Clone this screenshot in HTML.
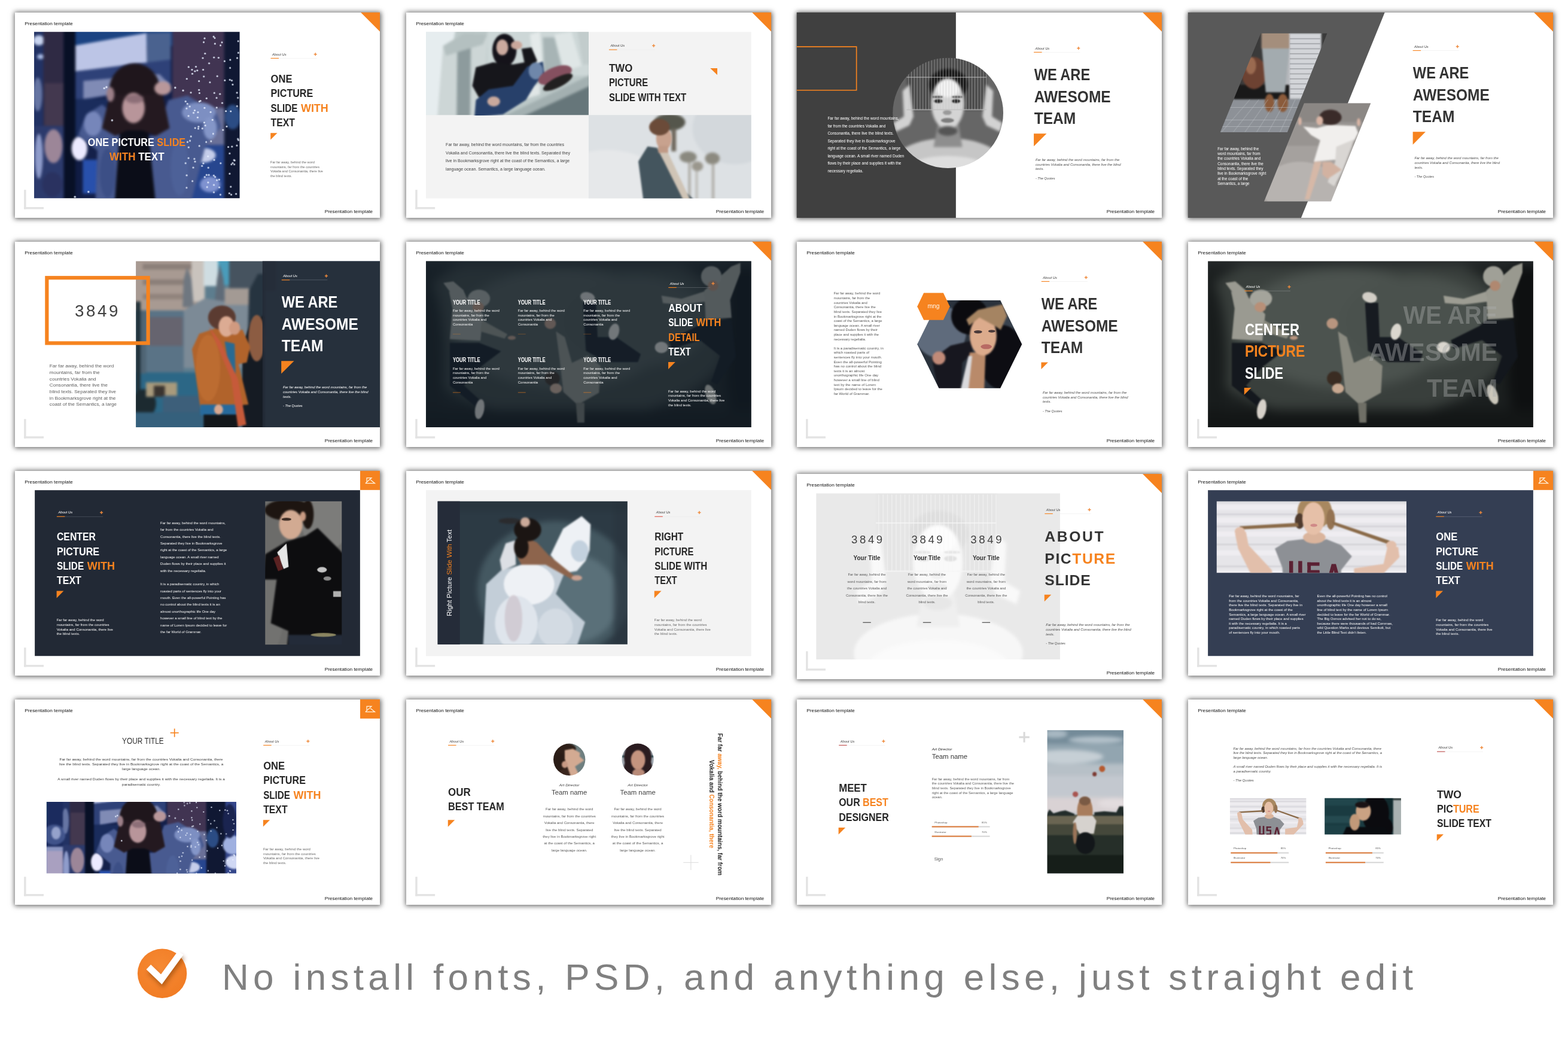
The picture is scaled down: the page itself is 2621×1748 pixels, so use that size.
<!DOCTYPE html>
<html lang="en"><head><meta charset="utf-8"><title>Presentation template</title>
<style>
html,body{margin:0;padding:0;background:#fff}
body{width:2621px;height:1748px;position:relative;overflow:hidden;font-family:"Liberation Sans",sans-serif}
.f{position:absolute;width:610.3px;height:343.3px;background:#fff;box-shadow:0 0 8px 1.5px rgba(0,0,0,.6)}
svg{position:absolute;overflow:visible;opacity:.999}
svg text{font-family:"Liberation Sans",sans-serif;white-space:pre}
</style></head><body>
<div class="f" style="left:24.8px;top:20.80px"></div>
<div class="f" style="left:678.8px;top:20.80px"></div>
<div class="f" style="left:1331.7px;top:20.80px"></div>
<div class="f" style="left:1985.7px;top:20.80px"></div>
<div class="f" style="left:24.8px;top:403.70px"></div>
<div class="f" style="left:678.8px;top:403.70px"></div>
<div class="f" style="left:1331.7px;top:403.70px"></div>
<div class="f" style="left:1985.7px;top:403.70px"></div>
<div class="f" style="left:24.8px;top:786.85px;height:342.3px"></div>
<div class="f" style="left:678.8px;top:786.85px;height:342.3px"></div>
<div class="f" style="left:1331.7px;top:792.00px"></div>
<div class="f" style="left:1985.7px;top:786.85px;height:342.3px"></div>
<div class="f" style="left:24.8px;top:1168.80px"></div>
<div class="f" style="left:678.8px;top:1168.80px"></div>
<div class="f" style="left:1331.7px;top:1168.80px"></div>
<div class="f" style="left:1985.7px;top:1168.80px"></div>
<svg width="0" height="0" style="left:0;top:0"><defs><filter id="b12" x="-20%" y="-20%" width="140%" height="140%" color-interpolation-filters="sRGB"><feGaussianBlur stdDeviation="12"/></filter><filter id="b10" x="-20%" y="-20%" width="140%" height="140%" color-interpolation-filters="sRGB"><feGaussianBlur stdDeviation="10"/></filter><filter id="b3" x="-20%" y="-20%" width="140%" height="140%" color-interpolation-filters="sRGB"><feGaussianBlur stdDeviation="3"/></filter><filter id="b9" x="-20%" y="-20%" width="140%" height="140%" color-interpolation-filters="sRGB"><feGaussianBlur stdDeviation="9"/></filter><filter id="b6" x="-20%" y="-20%" width="140%" height="140%" color-interpolation-filters="sRGB"><feGaussianBlur stdDeviation="6"/></filter><filter id="b14" x="-20%" y="-20%" width="140%" height="140%" color-interpolation-filters="sRGB"><feGaussianBlur stdDeviation="14"/></filter><filter id="b2" x="-20%" y="-20%" width="140%" height="140%" color-interpolation-filters="sRGB"><feGaussianBlur stdDeviation="2"/></filter><filter id="b8" x="-20%" y="-20%" width="140%" height="140%" color-interpolation-filters="sRGB"><feGaussianBlur stdDeviation="8"/></filter><filter id="b40" x="-20%" y="-20%" width="140%" height="140%" color-interpolation-filters="sRGB"><feGaussianBlur stdDeviation="40"/></filter><filter id="b5" x="-20%" y="-20%" width="140%" height="140%" color-interpolation-filters="sRGB"><feGaussianBlur stdDeviation="5"/></filter><filter id="b4" x="-20%" y="-20%" width="140%" height="140%" color-interpolation-filters="sRGB"><feGaussianBlur stdDeviation="4"/></filter><filter id="b30" x="-20%" y="-20%" width="140%" height="140%" color-interpolation-filters="sRGB"><feGaussianBlur stdDeviation="30"/></filter><filter id="b20" x="-20%" y="-20%" width="140%" height="140%" color-interpolation-filters="sRGB"><feGaussianBlur stdDeviation="20"/></filter></defs></svg>
<svg style="left:0px;top:0px" width="660" height="400" viewBox="0 0 2351 1425">
<text x="147.0" y="148.0" font-size="27.0" fill="#0d0d0d" textLength="287.0" lengthAdjust="spacingAndGlyphs">Presentation template</text>
<polygon points="2148.0,74.0 2262.0,74.0 2262.0,188.0" fill="#f6831f" />
<rect x="143.0" y="1130.0" width="12.0" height="115.0" fill="#e3e3e3" />
<rect x="143.0" y="1233.0" width="117.0" height="12.0" fill="#e3e3e3" />
<text x="2220.0" y="1268.5" font-size="27.0" fill="#0d0d0d" text-anchor="end" textLength="287.0" lengthAdjust="spacingAndGlyphs">Presentation template</text>
<clipPath id="c1"><rect x="203.0" y="190.0" width="1224.0" height="990.0"/></clipPath>
<g clip-path="url(#c1)"><g transform="translate(177.50,159.84) scale(0.67105,0.67028)"><g filter="url(#b12)"><rect x="-200" y="-200" width="2300" height="2000" fill="#14204a"/><rect x="-100" y="-100" width="225" height="1800" fill="#223264"/><ellipse cx="80" cy="120" rx="50" ry="45" fill="#c8d4f0"/><ellipse cx="95" cy="265" rx="30" ry="22" fill="#a9bbe6"/><ellipse cx="70" cy="600" rx="40" ry="150" fill="#6675a3"/><rect x="120" y="-100" width="180" height="980" fill="#2f2a44"/><rect x="130" y="500" width="170" height="380" fill="#43384f"/><rect x="300" y="-100" width="105" height="1800" fill="#081026"/><rect x="405" y="-100" width="65" height="1800" fill="#101c44"/><rect x="405" y="-100" width="860" height="270" fill="#1b4382"/><polygon points="405,165 1035,55 1040,330 405,395" fill="#bcc5e6"/><polygon points="1040,55 1250,50 1250,300 1040,330" fill="#4a628f"/><polygon points="405,395 1250,290 1250,520 470,650 405,650" fill="#2e4178"/><polygon points="475,480 1150,420 1250,520 475,640" fill="#808bb5"/><rect x="405" y="640" width="295" height="360" fill="#1a2c5c"/><rect x="1265" y="-100" width="460" height="820" fill="#413452"/><rect x="1725" y="-100" width="375" height="1800" fill="#101833"/><ellipse cx="1800" cy="800" rx="70" ry="110" fill="#2b4c84"/><rect x="1265" y="720" width="460" height="330" fill="#6a7098"/><rect x="-100" y="880" width="400" height="820" fill="#2c3a6c"/><ellipse cx="210" cy="1060" rx="80" ry="150" fill="#9c8698"/><ellipse cx="80" cy="1150" rx="35" ry="200" fill="#8f9ccb"/><ellipse cx="200" cy="1400" rx="90" ry="110" fill="#2a3260"/><ellipse cx="440" cy="1080" rx="70" ry="105" fill="#eceaff"/><rect x="470" y="1180" width="140" height="300" fill="#2850ac"/><rect x="1420" y="1050" width="305" height="650" fill="#27468f"/><ellipse cx="1540" cy="1140" rx="110" ry="65" fill="#c5cdea"/><ellipse cx="1600" cy="1400" rx="90" ry="70" fill="#7f92d0"/></g><g filter="url(#b10)"><polygon points="430,960 500,780 640,690 730,760 770,900 900,970 1110,970 1230,650 1400,610 1660,770 1700,890 1560,1050 1420,1600 580,1600 600,1100" fill="#485a90"/><ellipse cx="560" cy="860" rx="80" ry="110" fill="#7686ba"/><ellipse cx="1500" cy="760" rx="150" ry="90" fill="#7d8fc2"/><ellipse cx="1330" cy="1250" rx="80" ry="250" fill="#4d6198"/><ellipse cx="690" cy="1300" rx="70" ry="220" fill="#3c4f86"/><ellipse cx="1600" cy="900" rx="60" ry="100" fill="#8496c8"/><polygon points="800,900 1050,900 1120,1600 750,1600" fill="#0b0d18"/><ellipse cx="930" cy="560" rx="225" ry="235" fill="#1f161c"/><polygon points="710,600 640,900 760,970 860,920 1000,920 1120,970 1240,900 1180,600" fill="#241920"/><ellipse cx="920" cy="720" rx="100" ry="135" fill="#b8959a"/><ellipse cx="930" cy="640" rx="80" ry="40" fill="#8d6f78"/><ellipse cx="1180" cy="545" rx="75" ry="60" fill="#b9979a"/><ellipse cx="715" cy="600" rx="35" ry="65" fill="#9c7f88"/></g><g filter="url(#b3)"><ellipse cx="1535" cy="277" rx="8" ry="8" fill="#e8f0ff" opacity="0.9"/><ellipse cx="1692" cy="164" rx="8" ry="8" fill="#e8f0ff" opacity="0.9"/><ellipse cx="1637" cy="587" rx="8" ry="8" fill="#e8f0ff" opacity="0.9"/><ellipse cx="1408" cy="791" rx="8" ry="8" fill="#e8f0ff" opacity="0.9"/><ellipse cx="1398" cy="684" rx="8" ry="8" fill="#e8f0ff" opacity="0.9"/><ellipse cx="1584" cy="1251" rx="8" ry="8" fill="#e8f0ff" opacity="0.9"/><ellipse cx="1439" cy="381" rx="8" ry="8" fill="#e8f0ff" opacity="0.9"/><ellipse cx="1681" cy="1425" rx="8" ry="8" fill="#e8f0ff" opacity="0.9"/><ellipse cx="1657" cy="631" rx="8" ry="8" fill="#e8f0ff" opacity="0.9"/><ellipse cx="1849" cy="127" rx="8" ry="8" fill="#e8f0ff" opacity="0.9"/><ellipse cx="1792" cy="477" rx="8" ry="8" fill="#e8f0ff" opacity="0.9"/><ellipse cx="1528" cy="1235" rx="8" ry="8" fill="#e8f0ff" opacity="0.9"/><ellipse cx="1467" cy="898" rx="8" ry="8" fill="#e8f0ff" opacity="0.9"/><ellipse cx="1687" cy="596" rx="8" ry="8" fill="#e8f0ff" opacity="0.9"/><ellipse cx="1643" cy="150" rx="8" ry="8" fill="#e8f0ff" opacity="0.9"/><ellipse cx="1409" cy="357" rx="8" ry="8" fill="#e8f0ff" opacity="0.9"/><ellipse cx="1707" cy="676" rx="8" ry="8" fill="#e8f0ff" opacity="0.9"/><ellipse cx="1531" cy="903" rx="8" ry="8" fill="#e8f0ff" opacity="0.9"/><ellipse cx="1598" cy="492" rx="8" ry="8" fill="#e8f0ff" opacity="0.9"/><ellipse cx="1761" cy="1067" rx="8" ry="8" fill="#e8f0ff" opacity="0.9"/><ellipse cx="1497" cy="887" rx="8" ry="8" fill="#e8f0ff" opacity="0.9"/><ellipse cx="1632" cy="1320" rx="8" ry="8" fill="#e8f0ff" opacity="0.9"/><ellipse cx="1730" cy="475" rx="8" ry="8" fill="#e8f0ff" opacity="0.9"/><ellipse cx="1850" cy="230" rx="8" ry="8" fill="#e8f0ff" opacity="0.9"/><ellipse cx="1581" cy="1150" rx="8" ry="8" fill="#e8f0ff" opacity="0.9"/><ellipse cx="1453" cy="764" rx="8" ry="8" fill="#e8f0ff" opacity="0.9"/><ellipse cx="1399" cy="1022" rx="8" ry="8" fill="#e8f0ff" opacity="0.9"/><ellipse cx="1747" cy="885" rx="8" ry="8" fill="#e8f0ff" opacity="0.9"/><ellipse cx="1800" cy="512" rx="8" ry="8" fill="#e8f0ff" opacity="0.9"/><ellipse cx="1714" cy="916" rx="8" ry="8" fill="#e8f0ff" opacity="0.9"/><ellipse cx="1658" cy="717" rx="8" ry="8" fill="#e8f0ff" opacity="0.9"/><ellipse cx="1783" cy="1420" rx="8" ry="8" fill="#e8f0ff" opacity="0.9"/><ellipse cx="1608" cy="1016" rx="8" ry="8" fill="#e8f0ff" opacity="0.9"/><ellipse cx="1409" cy="1070" rx="8" ry="8" fill="#e8f0ff" opacity="0.9"/><ellipse cx="1691" cy="1490" rx="8" ry="8" fill="#e8f0ff" opacity="0.9"/><ellipse cx="1775" cy="470" rx="8" ry="8" fill="#e8f0ff" opacity="0.9"/><ellipse cx="1565" cy="1023" rx="8" ry="8" fill="#e8f0ff" opacity="0.9"/><ellipse cx="1391" cy="725" rx="8" ry="8" fill="#e8f0ff" opacity="0.9"/><ellipse cx="1408" cy="1166" rx="8" ry="8" fill="#e8f0ff" opacity="0.9"/><ellipse cx="1442" cy="417" rx="8" ry="8" fill="#e8f0ff" opacity="0.9"/><ellipse cx="1568" cy="1315" rx="8" ry="8" fill="#e8f0ff" opacity="0.9"/><ellipse cx="1419" cy="707" rx="8" ry="8" fill="#e8f0ff" opacity="0.9"/><ellipse cx="1644" cy="1332" rx="8" ry="8" fill="#e8f0ff" opacity="0.9"/><ellipse cx="1773" cy="1304" rx="8" ry="8" fill="#e8f0ff" opacity="0.9"/><ellipse cx="1514" cy="658" rx="8" ry="8" fill="#e8f0ff" opacity="0.9"/><ellipse cx="1552" cy="1333" rx="8" ry="8" fill="#e8f0ff" opacity="0.9"/><ellipse cx="1840" cy="277" rx="8" ry="8" fill="#e8f0ff" opacity="0.9"/><ellipse cx="1465" cy="394" rx="8" ry="8" fill="#e8f0ff" opacity="0.9"/><ellipse cx="1492" cy="758" rx="8" ry="8" fill="#e8f0ff" opacity="0.9"/><ellipse cx="1663" cy="438" rx="8" ry="8" fill="#e8f0ff" opacity="0.9"/><ellipse cx="1382" cy="663" rx="8" ry="8" fill="#e8f0ff" opacity="0.9"/><ellipse cx="1557" cy="876" rx="8" ry="8" fill="#e8f0ff" opacity="0.9"/><ellipse cx="1837" cy="1054" rx="8" ry="8" fill="#e8f0ff" opacity="0.9"/><ellipse cx="1627" cy="949" rx="8" ry="8" fill="#e8f0ff" opacity="0.9"/><ellipse cx="1705" cy="138" rx="8" ry="8" fill="#e8f0ff" opacity="0.9"/><ellipse cx="1812" cy="1183" rx="8" ry="8" fill="#e8f0ff" opacity="0.9"/><ellipse cx="1800" cy="1209" rx="8" ry="8" fill="#e8f0ff" opacity="0.9"/><ellipse cx="1568" cy="635" rx="8" ry="8" fill="#e8f0ff" opacity="0.9"/><ellipse cx="1430" cy="973" rx="8" ry="8" fill="#e8f0ff" opacity="0.9"/><ellipse cx="1543" cy="136" rx="8" ry="8" fill="#e8f0ff" opacity="0.9"/><ellipse cx="1429" cy="584" rx="8" ry="8" fill="#e8f0ff" opacity="0.9"/><ellipse cx="1392" cy="1319" rx="8" ry="8" fill="#e8f0ff" opacity="0.9"/><ellipse cx="1675" cy="274" rx="8" ry="8" fill="#e8f0ff" opacity="0.9"/><ellipse cx="1501" cy="560" rx="8" ry="8" fill="#e8f0ff" opacity="0.9"/><ellipse cx="1555" cy="237" rx="8" ry="8" fill="#e8f0ff" opacity="0.9"/><ellipse cx="1787" cy="1490" rx="8" ry="8" fill="#e8f0ff" opacity="0.9"/><ellipse cx="1604" cy="757" rx="8" ry="8" fill="#e8f0ff" opacity="0.9"/><ellipse cx="1544" cy="441" rx="8" ry="8" fill="#e8f0ff" opacity="0.9"/><ellipse cx="1778" cy="292" rx="8" ry="8" fill="#e8f0ff" opacity="0.9"/><ellipse cx="1391" cy="1429" rx="8" ry="8" fill="#e8f0ff" opacity="0.9"/><ellipse cx="1634" cy="271" rx="8" ry="8" fill="#e8f0ff" opacity="0.9"/><ellipse cx="1641" cy="99" rx="8" ry="8" fill="#e8f0ff" opacity="0.9"/><ellipse cx="1633" cy="1469" rx="8" ry="8" fill="#e8f0ff" opacity="0.9"/><ellipse cx="1794" cy="1063" rx="8" ry="8" fill="#e8f0ff" opacity="0.9"/><ellipse cx="1505" cy="588" rx="8" ry="8" fill="#e8f0ff" opacity="0.9"/><ellipse cx="1460" cy="1172" rx="8" ry="8" fill="#e8f0ff" opacity="0.9"/><ellipse cx="1636" cy="1182" rx="8" ry="8" fill="#e8f0ff" opacity="0.9"/><ellipse cx="1538" cy="381" rx="8" ry="8" fill="#e8f0ff" opacity="0.9"/><ellipse cx="1770" cy="1478" rx="8" ry="8" fill="#e8f0ff" opacity="0.9"/><ellipse cx="1789" cy="1221" rx="8" ry="8" fill="#e8f0ff" opacity="0.9"/><ellipse cx="1773" cy="1125" rx="8" ry="8" fill="#e8f0ff" opacity="0.9"/><ellipse cx="1489" cy="805" rx="8" ry="8" fill="#e8f0ff" opacity="0.9"/><ellipse cx="1551" cy="102" rx="8" ry="8" fill="#e8f0ff" opacity="0.9"/><ellipse cx="1393" cy="462" rx="8" ry="8" fill="#e8f0ff" opacity="0.9"/><ellipse cx="1504" cy="1057" rx="8" ry="8" fill="#e8f0ff" opacity="0.9"/><ellipse cx="1839" cy="704" rx="8" ry="8" fill="#e8f0ff" opacity="0.9"/><ellipse cx="1830" cy="1483" rx="8" ry="8" fill="#e8f0ff" opacity="0.9"/><ellipse cx="1838" cy="585" rx="8" ry="8" fill="#e8f0ff" opacity="0.9"/><ellipse cx="1486" cy="387" rx="8" ry="8" fill="#e8f0ff" opacity="0.9"/><ellipse cx="1474" cy="354" rx="8" ry="8" fill="#e8f0ff" opacity="0.9"/><ellipse cx="1680" cy="1356" rx="8" ry="8" fill="#e8f0ff" opacity="0.9"/><ellipse cx="1783" cy="750" rx="8" ry="8" fill="#e8f0ff" opacity="0.9"/><ellipse cx="1693" cy="1211" rx="8" ry="8" fill="#e8f0ff" opacity="0.9"/><ellipse cx="1421" cy="1011" rx="8" ry="8" fill="#e8f0ff" opacity="0.9"/><ellipse cx="1817" cy="1187" rx="8" ry="8" fill="#e8f0ff" opacity="0.9"/><ellipse cx="1740" cy="748" rx="8" ry="8" fill="#e8f0ff" opacity="0.9"/><ellipse cx="1466" cy="1196" rx="8" ry="8" fill="#e8f0ff" opacity="0.9"/><ellipse cx="1540" cy="1213" rx="8" ry="8" fill="#e8f0ff" opacity="0.9"/><ellipse cx="1846" cy="630" rx="8" ry="8" fill="#e8f0ff" opacity="0.9"/><ellipse cx="1573" cy="1423" rx="8" ry="8" fill="#e8f0ff" opacity="0.9"/><ellipse cx="1728" cy="305" rx="8" ry="8" fill="#e8f0ff" opacity="0.9"/><ellipse cx="1814" cy="1221" rx="8" ry="8" fill="#e8f0ff" opacity="0.9"/><ellipse cx="1450" cy="1250" rx="8" ry="8" fill="#e8f0ff" opacity="0.9"/><ellipse cx="1851" cy="1006" rx="8" ry="8" fill="#e8f0ff" opacity="0.9"/><ellipse cx="1548" cy="850" rx="8" ry="8" fill="#e8f0ff" opacity="0.9"/><ellipse cx="1846" cy="996" rx="8" ry="8" fill="#e8f0ff" opacity="0.9"/><ellipse cx="1633" cy="1404" rx="8" ry="8" fill="#e8f0ff" opacity="0.9"/><ellipse cx="1588" cy="1315" rx="8" ry="8" fill="#e8f0ff" opacity="0.9"/><ellipse cx="1777" cy="364" rx="8" ry="8" fill="#e8f0ff" opacity="0.9"/><ellipse cx="1501" cy="482" rx="8" ry="8" fill="#e8f0ff" opacity="0.9"/><ellipse cx="1495" cy="904" rx="8" ry="8" fill="#e8f0ff" opacity="0.9"/><ellipse cx="1504" cy="663" rx="8" ry="8" fill="#e8f0ff" opacity="0.9"/><ellipse cx="1443" cy="1370" rx="8" ry="8" fill="#e8f0ff" opacity="0.9"/><ellipse cx="1550" cy="720" rx="8" ry="8" fill="#e8f0ff" opacity="0.9"/><ellipse cx="1660" cy="1362" rx="8" ry="8" fill="#e8f0ff" opacity="0.9"/><ellipse cx="1582" cy="1382" rx="8" ry="8" fill="#e8f0ff" opacity="0.9"/><ellipse cx="1621" cy="826" rx="8" ry="8" fill="#e8f0ff" opacity="0.9"/><ellipse cx="1631" cy="87" rx="8" ry="8" fill="#e8f0ff" opacity="0.9"/><ellipse cx="1591" cy="324" rx="8" ry="8" fill="#e8f0ff" opacity="0.9"/><ellipse cx="1382" cy="1211" rx="8" ry="8" fill="#e8f0ff" opacity="0.9"/><ellipse cx="1463" cy="742" rx="8" ry="8" fill="#e8f0ff" opacity="0.9"/><ellipse cx="660" cy="545" rx="9" ry="9" fill="#e8f0ff" opacity="0.9"/><ellipse cx="680" cy="535" rx="9" ry="9" fill="#e8f0ff" opacity="0.9"/><ellipse cx="520" cy="1465" rx="9" ry="9" fill="#e8f0ff" opacity="0.9"/><ellipse cx="400" cy="1510" rx="9" ry="9" fill="#e8f0ff" opacity="0.9"/><ellipse cx="1290" cy="540" rx="9" ry="9" fill="#e8f0ff" opacity="0.9"/><ellipse cx="1360" cy="565" rx="9" ry="9" fill="#e8f0ff" opacity="0.9"/><ellipse cx="730" cy="830" rx="9" ry="9" fill="#e8f0ff" opacity="0.9"/></g></g></g>
<text x="523.0" y="868.0" font-size="64.0" fill="#ffffff" font-weight="bold" textLength="582.0" lengthAdjust="spacingAndGlyphs"><tspan fill="#ffffff">ONE PICTURE </tspan><tspan fill="#f6831f">SLIDE</tspan></text>
<text x="652.0" y="955.0" font-size="64.0" fill="#ffffff" font-weight="bold" textLength="326.0" lengthAdjust="spacingAndGlyphs"><tspan fill="#f6831f">WITH</tspan><tspan fill="#ffffff"> TEXT</tspan></text>
<text x="1621.0" y="330.0" font-size="19.0" fill="#404040" font-style="italic" textLength="84.0" lengthAdjust="spacingAndGlyphs">About Us</text>
<rect x="1612.0" y="346.0" width="275.0" height="2.0" fill="#ebebeb" />
<rect x="1612.0" y="345.0" width="48.0" height="4.0" fill="#f6831f" />
<rect x="1869.0" y="320.5" width="18.0" height="5.0" fill="#ef8a3c" />
<rect x="1875.5" y="314.0" width="5.0" height="18.0" fill="#ef8a3c" />
<text x="1612.0" y="492.0" font-size="64.0" fill="#262626" font-weight="bold" textLength="128.0" lengthAdjust="spacingAndGlyphs">ONE</text>
<text x="1612.0" y="578.0" font-size="64.0" fill="#262626" font-weight="bold" textLength="252.0" lengthAdjust="spacingAndGlyphs">PICTURE</text>
<text x="1612.0" y="665.0" font-size="64.0" fill="#262626" font-weight="bold" textLength="159.8" lengthAdjust="spacingAndGlyphs">SLIDE</text>
<text x="1791.7" y="665.0" font-size="64.0" fill="#f6831f" font-weight="bold" textLength="163.3" lengthAdjust="spacingAndGlyphs">WITH</text>
<text x="1612.0" y="752.0" font-size="64.0" fill="#262626" font-weight="bold" textLength="144.0" lengthAdjust="spacingAndGlyphs">TEXT</text>
<polygon points="1611.0,792.0 1651.0,792.0 1611.0,832.0" fill="#f6831f" />
<text x="1610.0" y="972.6" font-size="21.5" fill="#6a6a6a" textLength="263.0" lengthAdjust="spacingAndGlyphs">Far far away, behind the word</text>
<text x="1610.0" y="999.7" font-size="21.5" fill="#6a6a6a" textLength="292.3" lengthAdjust="spacingAndGlyphs">mountains, far from the countries</text>
<text x="1610.0" y="1026.8" font-size="21.5" fill="#6a6a6a" textLength="313.5" lengthAdjust="spacingAndGlyphs">Vokalia and Consonantia, there live</text>
<text x="1610.0" y="1053.9" font-size="21.5" fill="#6a6a6a" textLength="128.9" lengthAdjust="spacingAndGlyphs">the blind texts.</text>
</svg>
<svg style="left:653px;top:0px" width="660" height="400" viewBox="0 0 2351 1425">
<rect x="210.0" y="190.0" width="1937.0" height="991.0" fill="#f3f3f3" />
<text x="151.0" y="148.0" font-size="27.0" fill="#0d0d0d" textLength="287.0" lengthAdjust="spacingAndGlyphs">Presentation template</text>
<polygon points="2152.0,74.0 2266.0,74.0 2266.0,188.0" fill="#f6831f" />
<rect x="147.0" y="1130.0" width="12.0" height="115.0" fill="#e3e3e3" />
<rect x="147.0" y="1233.0" width="117.0" height="12.0" fill="#e3e3e3" />
<text x="2224.0" y="1268.5" font-size="27.0" fill="#0d0d0d" text-anchor="end" textLength="287.0" lengthAdjust="spacingAndGlyphs">Presentation template</text>
<clipPath id="c2"><rect x="210.0" y="190.0" width="969.0" height="495.0"/></clipPath>
<g clip-path="url(#c2)"><g transform="translate(184.52,171.32) scale(0.84926,0.84906)"><g filter="url(#b9)"><rect x="-100" y="-100" width="1400" height="900" fill="#bcc8c8"/><polygon points="0,0 240,0 115,620 0,620" fill="#e6edef"/><polygon points="150,120 300,30 460,40 440,620 110,620" fill="#cdd6d6"/><polygon points="250,150 345,110 340,620 245,620" fill="#8d9b9d"/><polygon points="150,120 300,30 460,40 430,110 170,190" fill="#b4c0c0"/><rect x="460" y="-20" width="740" height="350" fill="#cdd7d7"/><polygon points="760,40 830,20 850,300 790,330" fill="#e4eaea"/><polygon points="930,40 1050,20 1120,260 1000,300" fill="#dfe6e6"/><polygon points="850,60 930,60 990,300 860,300" fill="#a7b4b5"/><polygon points="1090,0 1180,0 1180,250 1130,250" fill="#c2cccc"/><polygon points="560,620 1180,325 1180,420 700,620" fill="#a3b0b1"/><polygon points="700,620 1180,400 1180,620" fill="#66767a"/><polygon points="720,430 830,380 830,460 740,490" fill="#e0e6e6"/></g><g filter="url(#b6)"><ellipse cx="580" cy="150" rx="85" ry="115" fill="#15131a"/><polygon points="380,270 500,235 640,250 720,235 700,140 770,130 810,225 730,300 650,420 400,480 355,400" fill="#16161b"/><polygon points="380,500 470,425 640,400 740,265 850,230 860,310 790,400 730,500 570,600 370,620" fill="#27406a"/><ellipse cx="800" cy="295" rx="50" ry="60" fill="#6f87aa"/><ellipse cx="935" cy="325" rx="125" ry="55" fill="#85505f" transform="rotate(-22 935 325)"/><ellipse cx="955" cy="375" rx="115" ry="35" fill="#222020" transform="rotate(-27 955 375)"/><ellipse cx="565" cy="130" rx="42" ry="55" fill="#cbaa9f"/><ellipse cx="665" cy="115" rx="40" ry="30" fill="#c9a79b"/><ellipse cx="505" cy="510" rx="45" ry="35" fill="#c9a99d"/></g></g></g>
<clipPath id="c3"><rect x="1179.0" y="685.0" width="968.0" height="496.0"/></clipPath>
<g clip-path="url(#c3)"><g transform="translate(186.42,172.04) scale(0.84764,0.84786)"><g filter="url(#b10)"><rect x="1000" y="500" width="1500" height="800" fill="#dde1e4"/><ellipse cx="1300" cy="1100" rx="400" ry="250" fill="#e6e8ea"/><ellipse cx="2200" cy="700" rx="300" ry="250" fill="#d3d8dc"/><ellipse cx="1740" cy="655" rx="110" ry="60" fill="#55564c"/><rect x="1752" y="700" width="33" height="160" fill="#6e675c"/><ellipse cx="1870" cy="900" rx="60" ry="40" fill="#8a897f"/><rect x="1873" y="930" width="12" height="270" fill="#9a958b"/><ellipse cx="1935" cy="965" rx="40" ry="35" fill="#9a978d"/><rect x="1925" y="990" width="10" height="210" fill="#a8a399"/><ellipse cx="2040" cy="910" rx="52" ry="42" fill="#8c8a80"/><rect x="2039" y="940" width="12" height="260" fill="#9a958b"/></g><g filter="url(#b6)"><polygon points="1520,930 1585,825 1690,840 1770,960 1840,1130 1910,1200 1555,1200" fill="#44555e"/><polygon points="1650,835 1725,860 1885,1200 1835,1200 1700,930" fill="#cfc4b6"/><ellipse cx="1700" cy="770" rx="55" ry="80" fill="#c8a28e"/><ellipse cx="1668" cy="690" rx="72" ry="58" fill="#6b4b39"/><rect x="1660" y="820" width="70" height="50" fill="#c09a86"/></g></g></g>
<text x="1309.0" y="279.0" font-size="19.0" fill="#404040" font-style="italic" textLength="84.0" lengthAdjust="spacingAndGlyphs">About Us</text>
<rect x="1300.0" y="295.0" width="275.0" height="2.0" fill="#ebebeb" />
<rect x="1300.0" y="294.0" width="48.0" height="4.0" fill="#f6831f" />
<rect x="1557.0" y="269.5" width="18.0" height="5.0" fill="#ef8a3c" />
<rect x="1563.5" y="263.0" width="5.0" height="18.0" fill="#ef8a3c" />
<text x="1300.0" y="427.0" font-size="64.0" fill="#262626" font-weight="bold" textLength="140.0" lengthAdjust="spacingAndGlyphs">TWO</text>
<text x="1300.0" y="514.0" font-size="64.0" fill="#262626" font-weight="bold" textLength="232.0" lengthAdjust="spacingAndGlyphs">PICTURE</text>
<text x="1300.0" y="601.0" font-size="64.0" fill="#262626" font-weight="bold" textLength="460.0" lengthAdjust="spacingAndGlyphs">SLIDE WITH TEXT</text>
<polygon points="1903.0,406.0 1945.0,406.0 1945.0,446.0" fill="#f6831f" />
<text x="328.0" y="868.5" font-size="25.0" fill="#404040" textLength="705.0" lengthAdjust="spacingAndGlyphs">Far far away, behind the word mountains, far from the countries</text>
<text x="328.0" y="917.8" font-size="25.0" fill="#404040" textLength="740.5" lengthAdjust="spacingAndGlyphs">Vokalia and Consonantia, there live the blind texts. Separated they</text>
<text x="328.0" y="967.1" font-size="25.0" fill="#404040" textLength="737.6" lengthAdjust="spacingAndGlyphs">live in Bookmarksgrove right at the coast of the Semantics, a large</text>
<text x="328.0" y="1016.4" font-size="25.0" fill="#404040" textLength="593.9" lengthAdjust="spacingAndGlyphs">language ocean. Semantics, a large language ocean.</text>
</svg>
<svg style="left:1307px;top:0px" width="660" height="400" viewBox="0 0 2351 1425">
<rect x="88.0" y="74.0" width="948.0" height="1223.0" fill="#404040" />
<polygon points="2148.0,74.0 2262.0,74.0 2262.0,188.0" fill="#f6831f" />
<text x="2220.0" y="1268.5" font-size="27.0" fill="#0d0d0d" text-anchor="end" textLength="287.0" lengthAdjust="spacingAndGlyphs">Presentation template</text>
<path d="M88,278 L444,278 L444,537 L88,537" fill="none" stroke="#f6831f" stroke-width="6"/>
<clipPath id="c4"><circle cx="989" cy="672.5" r="329"/></clipPath>
<g clip-path="url(#c4)"><g transform="translate(616.24,302.78) scale(0.47706,0.47706)"><g filter="url(#b14)"><rect x="-400" y="-400" width="2400" height="2400" fill="#666666"/><rect x="265" y="-100" width="1000" height="840" fill="#4c4c4c"/><ellipse cx="782" cy="1420" rx="700" ry="330" fill="#c6c6c6"/><ellipse cx="782" cy="1560" rx="600" ry="250" fill="#dedede"/><polygon points="660,900 910,900 960,1200 600,1200" fill="#8e8e8e"/><polygon points="100,900 230,820 215,500 300,420 350,820 300,930 130,1010" fill="#d2d2d2"/><polygon points="1460,900 1330,820 1345,500 1260,420 1210,820 1260,930 1430,1010" fill="#d2d2d2"/><ellipse cx="785" cy="420" rx="245" ry="195" fill="#1b1b1b"/><ellipse cx="778" cy="660" rx="205" ry="320" fill="#d4d4d4"/><ellipse cx="778" cy="470" rx="150" ry="110" fill="#f1f1f1"/><ellipse cx="778" cy="1000" rx="120" ry="60" fill="#555555"/></g><g filter="url(#b6)"><ellipse cx="660" cy="628" rx="55" ry="24" fill="#2e2e2e"/><ellipse cx="882" cy="628" rx="55" ry="24" fill="#2e2e2e"/><ellipse cx="650" cy="575" rx="70" ry="12" fill="#4a4a4a"/><ellipse cx="895" cy="575" rx="70" ry="12" fill="#4a4a4a"/><ellipse cx="775" cy="868" rx="82" ry="30" fill="#7d7d7d"/><ellipse cx="772" cy="770" rx="55" ry="30" fill="#9a9a9a"/></g><g filter="url(#b2)"><rect x="285" y="90" width="7" height="645" fill="#c8c8c8" opacity="0.55"/><rect x="321" y="90" width="7" height="645" fill="#c8c8c8" opacity="0.55"/><rect x="357" y="90" width="7" height="645" fill="#c8c8c8" opacity="0.55"/><rect x="393" y="90" width="7" height="645" fill="#c8c8c8" opacity="0.55"/><rect x="429" y="90" width="7" height="645" fill="#c8c8c8" opacity="0.55"/><rect x="465" y="90" width="7" height="645" fill="#c8c8c8" opacity="0.55"/><rect x="501" y="90" width="7" height="645" fill="#c8c8c8" opacity="0.55"/><rect x="537" y="90" width="7" height="645" fill="#c8c8c8" opacity="0.55"/><rect x="573" y="90" width="7" height="645" fill="#c8c8c8" opacity="0.55"/><rect x="609" y="90" width="7" height="645" fill="#c8c8c8" opacity="0.55"/><rect x="645" y="90" width="7" height="645" fill="#c8c8c8" opacity="0.55"/><rect x="681" y="90" width="7" height="645" fill="#c8c8c8" opacity="0.55"/><rect x="717" y="90" width="7" height="645" fill="#c8c8c8" opacity="0.55"/><rect x="753" y="90" width="7" height="645" fill="#c8c8c8" opacity="0.55"/><rect x="789" y="90" width="7" height="645" fill="#c8c8c8" opacity="0.55"/><rect x="825" y="90" width="7" height="645" fill="#c8c8c8" opacity="0.55"/><rect x="861" y="90" width="7" height="645" fill="#c8c8c8" opacity="0.55"/><rect x="897" y="90" width="7" height="645" fill="#c8c8c8" opacity="0.55"/><rect x="933" y="90" width="7" height="645" fill="#c8c8c8" opacity="0.55"/><rect x="969" y="90" width="7" height="645" fill="#c8c8c8" opacity="0.55"/><rect x="1005" y="90" width="7" height="645" fill="#c8c8c8" opacity="0.55"/><rect x="1041" y="90" width="7" height="645" fill="#c8c8c8" opacity="0.55"/><rect x="1077" y="90" width="7" height="645" fill="#c8c8c8" opacity="0.55"/><rect x="1113" y="90" width="7" height="645" fill="#c8c8c8" opacity="0.55"/><rect x="1149" y="90" width="7" height="645" fill="#c8c8c8" opacity="0.55"/><rect x="1185" y="90" width="7" height="645" fill="#c8c8c8" opacity="0.55"/><rect x="1221" y="90" width="7" height="645" fill="#c8c8c8" opacity="0.55"/><rect x="1257" y="90" width="7" height="645" fill="#c8c8c8" opacity="0.55"/><rect x="265" y="325" width="995" height="8" fill="#cfcfcf" opacity="0.8"/><rect x="265" y="728" width="995" height="12" fill="#bdbdbd" opacity="0.8"/></g></g></g>
<text x="272.0" y="712.5" font-size="25.0" fill="#ffffff" textLength="425.0" lengthAdjust="spacingAndGlyphs">Far far away, behind the word mountains,</text>
<text x="272.0" y="757.3" font-size="25.0" fill="#ffffff" textLength="345.5" lengthAdjust="spacingAndGlyphs">far from the countries Vokalia and</text>
<text x="272.0" y="802.1" font-size="25.0" fill="#ffffff" textLength="393.2" lengthAdjust="spacingAndGlyphs">Consonantia, there live the blind texts.</text>
<text x="272.0" y="846.9" font-size="25.0" fill="#ffffff" textLength="403.5" lengthAdjust="spacingAndGlyphs">Separated they live in Bookmarksgrove</text>
<text x="272.0" y="891.7" font-size="25.0" fill="#ffffff" textLength="434.5" lengthAdjust="spacingAndGlyphs">right at the coast of the Semantics, a large</text>
<text x="272.0" y="936.5" font-size="25.0" fill="#ffffff" textLength="455.1" lengthAdjust="spacingAndGlyphs">language ocean. A small river named Duden</text>
<text x="272.0" y="981.3" font-size="25.0" fill="#ffffff" textLength="438.3" lengthAdjust="spacingAndGlyphs">flows by their place and supplies it with the</text>
<text x="272.0" y="1026.1" font-size="25.0" fill="#ffffff" textLength="211.4" lengthAdjust="spacingAndGlyphs">necessary regelialia.</text>
<text x="1509.0" y="294.0" font-size="19.0" fill="#404040" font-style="italic" textLength="84.0" lengthAdjust="spacingAndGlyphs">About Us</text>
<rect x="1500.0" y="310.0" width="275.0" height="2.0" fill="#ebebeb" />
<rect x="1500.0" y="309.0" width="48.0" height="4.0" fill="#f6831f" />
<rect x="1757.0" y="284.5" width="18.0" height="5.0" fill="#ef8a3c" />
<rect x="1763.5" y="278.0" width="5.0" height="18.0" fill="#ef8a3c" />
<text x="1502.0" y="478.0" font-size="100.0" fill="#333333" font-weight="bold" textLength="333.0" lengthAdjust="spacingAndGlyphs">WE ARE</text>
<text x="1502.0" y="608.0" font-size="100.0" fill="#333333" font-weight="bold" textLength="456.0" lengthAdjust="spacingAndGlyphs">AWESOME</text>
<text x="1502.0" y="738.0" font-size="100.0" fill="#333333" font-weight="bold" textLength="248.0" lengthAdjust="spacingAndGlyphs">TEAM</text>
<polygon points="1500.0,795.0 1576.0,795.0 1500.0,871.0" fill="#f6831f" />
<text x="1510.0" y="958.5" font-size="21.0" fill="#4d4d4d" font-style="italic" textLength="500.0" lengthAdjust="spacingAndGlyphs">Far far away, behind the word mountains, far from the</text>
<text x="1510.0" y="986.0" font-size="21.0" fill="#4d4d4d" font-style="italic" textLength="507.9" lengthAdjust="spacingAndGlyphs">countries Vokalia and Consonantia, there live the blind</text>
<text x="1510.0" y="1013.5" font-size="21.0" fill="#4d4d4d" font-style="italic" textLength="50.4" lengthAdjust="spacingAndGlyphs">texts.</text>
<text x="1510.0" y="1067.5" font-size="21.0" fill="#4d4d4d" font-style="italic" textLength="116.0" lengthAdjust="spacingAndGlyphs">- The Quotes</text>
</svg>
<svg style="left:1961px;top:0px" width="660" height="400" viewBox="0 0 2351 1425">
<polygon points="88.0,74.0 1260.0,74.0 762.0,1297.0 88.0,1297.0" fill="#595959" />
<polygon points="2148.0,74.0 2262.0,74.0 2262.0,188.0" fill="#f6831f" />
<text x="2220.0" y="1268.5" font-size="27.0" fill="#0d0d0d" text-anchor="end" textLength="287.0" lengthAdjust="spacingAndGlyphs">Presentation template</text>
<clipPath id="c5"><polygon points="522,198 917,198 680,787 280,787"/></clipPath>
<g clip-path="url(#c5)"><g transform="translate(245.78,231.54) scale(0.63609,0.63609)"><g filter="url(#b9)"><rect x="-200" y="-400" width="1900" height="970" fill="#3a3a3a"/><rect x="700" y="-400" width="300" height="960" fill="#d3d5d9"/><rect x="660" y="-400" width="45" height="960" fill="#b5b7bb"/><rect x="-200" y="560" width="1900" height="440" fill="#8d9197"/><rect x="180" y="430" width="520" height="135" fill="#191919"/><ellipse cx="370" cy="320" rx="115" ry="150" fill="#6d4232"/><ellipse cx="340" cy="250" rx="50" ry="80" fill="#9a6a50"/><rect x="440" y="-400" width="260" height="490" fill="#a48e7c"/><polygon points="445,90 700,90 660,500 480,500" fill="#a3abaf"/><ellipse cx="515" cy="600" rx="45" ry="85" fill="#8b5b3b"/><ellipse cx="640" cy="600" rx="50" ry="85" fill="#8b5b3b"/></g><g filter="url(#b2)"><rect x="705" y="-336" width="285" height="10" fill="#9a9ca0" opacity="0.8"/><rect x="705" y="-289" width="285" height="10" fill="#9a9ca0" opacity="0.8"/><rect x="705" y="-242" width="285" height="10" fill="#9a9ca0" opacity="0.8"/><rect x="705" y="-195" width="285" height="10" fill="#9a9ca0" opacity="0.8"/><rect x="705" y="-148" width="285" height="10" fill="#9a9ca0" opacity="0.8"/><rect x="705" y="-101" width="285" height="10" fill="#9a9ca0" opacity="0.8"/><rect x="705" y="-54" width="285" height="10" fill="#9a9ca0" opacity="0.8"/><rect x="705" y="-7" width="285" height="10" fill="#9a9ca0" opacity="0.8"/><rect x="705" y="40" width="285" height="10" fill="#9a9ca0" opacity="0.8"/><rect x="705" y="87" width="285" height="10" fill="#9a9ca0" opacity="0.8"/><rect x="705" y="134" width="285" height="10" fill="#9a9ca0" opacity="0.8"/><rect x="705" y="181" width="285" height="10" fill="#9a9ca0" opacity="0.8"/><rect x="705" y="228" width="285" height="10" fill="#9a9ca0" opacity="0.8"/><rect x="705" y="275" width="285" height="10" fill="#9a9ca0" opacity="0.8"/><rect x="705" y="322" width="285" height="10" fill="#9a9ca0" opacity="0.8"/><rect x="705" y="369" width="285" height="10" fill="#9a9ca0" opacity="0.8"/><rect x="705" y="416" width="285" height="10" fill="#9a9ca0" opacity="0.8"/><rect x="705" y="463" width="285" height="10" fill="#9a9ca0" opacity="0.8"/><rect x="705" y="510" width="285" height="10" fill="#9a9ca0" opacity="0.8"/><line x1="60" y1="880" x2="330" y2="570" stroke="#c4c8cc" stroke-width="5" stroke-linecap="round" opacity="0.6"/><line x1="170" y1="880" x2="415" y2="570" stroke="#c4c8cc" stroke-width="5" stroke-linecap="round" opacity="0.6"/><line x1="280" y1="880" x2="500" y2="570" stroke="#c4c8cc" stroke-width="5" stroke-linecap="round" opacity="0.6"/><line x1="390" y1="880" x2="585" y2="570" stroke="#c4c8cc" stroke-width="5" stroke-linecap="round" opacity="0.6"/><line x1="500" y1="880" x2="670" y2="570" stroke="#c4c8cc" stroke-width="5" stroke-linecap="round" opacity="0.6"/><line x1="610" y1="880" x2="755" y2="570" stroke="#c4c8cc" stroke-width="5" stroke-linecap="round" opacity="0.6"/><line x1="720" y1="880" x2="840" y2="570" stroke="#c4c8cc" stroke-width="5" stroke-linecap="round" opacity="0.6"/><line x1="830" y1="880" x2="925" y2="570" stroke="#c4c8cc" stroke-width="5" stroke-linecap="round" opacity="0.6"/><line x1="0" y1="640" x2="1000" y2="640" stroke="#c4c8cc" stroke-width="4" stroke-linecap="round" opacity="0.5"/><line x1="0" y1="700" x2="1000" y2="700" stroke="#c4c8cc" stroke-width="4" stroke-linecap="round" opacity="0.5"/><line x1="0" y1="760" x2="1000" y2="760" stroke="#c4c8cc" stroke-width="4" stroke-linecap="round" opacity="0.5"/><line x1="0" y1="820" x2="1000" y2="820" stroke="#c4c8cc" stroke-width="4" stroke-linecap="round" opacity="0.5"/></g></g></g>
<clipPath id="c6"><polygon points="780,614 1177,614 940,1200 541,1200"/></clipPath>
<g clip-path="url(#c6)"><g transform="translate(245.78,231.54) scale(0.63609,0.63609)"><g filter="url(#b9)"><rect x="300" y="500" width="1400" height="1200" fill="#a5a19e"/><rect x="300" y="500" width="1400" height="280" fill="#8b8784"/><rect x="300" y="780" width="1400" height="220" fill="#989491"/><ellipse cx="800" cy="1400" rx="350" ry="250" fill="#b7b3b0"/><polygon points="830,820 960,835 1070,805 1320,815 1345,880 1310,950 1170,1010 1140,1130 930,1150 990,950 905,900" fill="#f1efed"/><polygon points="1140,1010 1310,940 1200,1230 1120,1380 1060,1340 1130,1150" fill="#d9d6d3"/><ellipse cx="1085" cy="735" rx="105" ry="72" fill="#3a2b29"/><ellipse cx="985" cy="765" rx="32" ry="42" fill="#d9b5a5"/><polygon points="935,1150 1005,1150 890,1500 845,1505" fill="#d6b8a7"/><polygon points="1010,1150 1090,1150 1190,1225 1060,1310 1010,1270" fill="#d2b2a1"/><ellipse cx="800" cy="770" rx="16" ry="38" fill="#d9b5a5"/><ellipse cx="1350" cy="780" rx="16" ry="38" fill="#d9b5a5"/></g></g></g>
<text x="264.0" y="892.5" font-size="25.0" fill="#ffffff" textLength="246.4" lengthAdjust="spacingAndGlyphs">Far far away, behind the</text>
<text x="264.0" y="922.4" font-size="25.0" fill="#ffffff" textLength="254.5" lengthAdjust="spacingAndGlyphs">word mountains, far from</text>
<text x="264.0" y="952.3" font-size="25.0" fill="#ffffff" textLength="257.1" lengthAdjust="spacingAndGlyphs">the countries Vokalia and</text>
<text x="264.0" y="982.2" font-size="25.0" fill="#ffffff" textLength="273.7" lengthAdjust="spacingAndGlyphs">Consonantia, there live the</text>
<text x="264.0" y="1012.1" font-size="25.0" fill="#ffffff" textLength="272.4" lengthAdjust="spacingAndGlyphs">blind texts. Separated they</text>
<text x="264.0" y="1042.0" font-size="25.0" fill="#ffffff" textLength="289.0" lengthAdjust="spacingAndGlyphs">live in Bookmarksgrove right</text>
<text x="264.0" y="1071.9" font-size="25.0" fill="#ffffff" textLength="182.9" lengthAdjust="spacingAndGlyphs">at the coast of the</text>
<text x="264.0" y="1101.8" font-size="25.0" fill="#ffffff" textLength="190.5" lengthAdjust="spacingAndGlyphs">Semantics, a large</text>
<text x="1436.0" y="284.0" font-size="19.0" fill="#404040" font-style="italic" textLength="84.0" lengthAdjust="spacingAndGlyphs">About Us</text>
<rect x="1427.0" y="300.0" width="275.0" height="2.0" fill="#ebebeb" />
<rect x="1427.0" y="299.0" width="48.0" height="4.0" fill="#f6831f" />
<rect x="1684.0" y="274.5" width="18.0" height="5.0" fill="#ef8a3c" />
<rect x="1690.5" y="268.0" width="5.0" height="18.0" fill="#ef8a3c" />
<text x="1428.0" y="468.0" font-size="100.0" fill="#333333" font-weight="bold" textLength="333.0" lengthAdjust="spacingAndGlyphs">WE ARE</text>
<text x="1428.0" y="598.0" font-size="100.0" fill="#333333" font-weight="bold" textLength="456.0" lengthAdjust="spacingAndGlyphs">AWESOME</text>
<text x="1428.0" y="728.0" font-size="100.0" fill="#333333" font-weight="bold" textLength="248.0" lengthAdjust="spacingAndGlyphs">TEAM</text>
<polygon points="1427.0,785.0 1503.0,785.0 1427.0,861.0" fill="#f6831f" />
<text x="1437.0" y="948.5" font-size="21.0" fill="#4d4d4d" font-style="italic" textLength="500.0" lengthAdjust="spacingAndGlyphs">Far far away, behind the word mountains, far from the</text>
<text x="1437.0" y="976.0" font-size="21.0" fill="#4d4d4d" font-style="italic" textLength="507.9" lengthAdjust="spacingAndGlyphs">countries Vokalia and Consonantia, there live the blind</text>
<text x="1437.0" y="1003.5" font-size="21.0" fill="#4d4d4d" font-style="italic" textLength="50.4" lengthAdjust="spacingAndGlyphs">texts.</text>
<text x="1437.0" y="1058.5" font-size="21.0" fill="#4d4d4d" font-style="italic" textLength="116.0" lengthAdjust="spacingAndGlyphs">- The Quotes</text>
</svg>
<svg style="left:0px;top:380px" width="660" height="400" viewBox="0 0 2351 1425">
<text x="147.0" y="159.0" font-size="27.0" fill="#0d0d0d" textLength="287.0" lengthAdjust="spacingAndGlyphs">Presentation template</text>
<rect x="143.0" y="1141.0" width="12.0" height="115.0" fill="#e3e3e3" />
<rect x="143.0" y="1244.0" width="117.0" height="12.0" fill="#e3e3e3" />
<text x="2220.0" y="1279.5" font-size="27.0" fill="#0d0d0d" text-anchor="end" textLength="287.0" lengthAdjust="spacingAndGlyphs">Presentation template</text>
<clipPath id="c7"><rect x="809.0" y="201.0" width="1453.0" height="989.0"/></clipPath>
<g clip-path="url(#c7)"><g transform="translate(783.95,177.92) scale(0.65926,0.65933)"><g filter="url(#b12)"><rect x="-200" y="-200" width="2700" height="2000" fill="#5d7d8e"/><rect x="-100" y="-100" width="760" height="600" fill="#a89a92"/><rect x="100" y="60" width="500" height="50" fill="#6e6460" opacity="0.5"/><rect x="100" y="200" width="500" height="50" fill="#6e6460" opacity="0.5"/><rect x="100" y="330" width="500" height="50" fill="#6e6460" opacity="0.4"/><rect x="540" y="-100" width="120" height="500" fill="#c9c3bd"/><rect x="650" y="-100" width="140" height="360" fill="#cfdde2"/><rect x="780" y="-100" width="110" height="350" fill="#4a9cba"/><rect x="880" y="-100" width="420" height="400" fill="#46535f"/><polygon points="460,450 470,200 500,90 540,200 560,450" fill="#6f7780"/><polygon points="750,400 770,200 795,60 830,200 845,400" fill="#5f6b78"/><polygon points="470,480 660,370 1060,430 1060,1000 470,1000" fill="#7c8a96"/><rect x="840" y="280" width="220" height="150" fill="#a39a94"/><polygon points="1050,700 1060,300 1140,150 1200,150 1200,700" fill="#263440"/><rect x="-100" y="480" width="570" height="570" fill="#5a7386"/><rect x="160" y="540" width="300" height="260" fill="#6e5a60" opacity="0.6"/><rect x="-100" y="1040" width="740" height="660" fill="#2c6786"/><rect x="36" y="400" width="44" height="1000" fill="#1f3038"/><rect x="80" y="480" width="50" height="570" fill="#4f6474"/><ellipse cx="110" cy="1320" rx="110" ry="130" fill="#1c2a30"/><rect x="130" y="1130" width="280" height="130" fill="#a89a7c"/><rect x="200" y="1160" width="100" height="100" fill="#3a3430"/><rect x="280" y="1250" width="340" height="150" fill="#3d5f7a"/><rect x="-100" y="1400" width="1300" height="300" fill="#35607c"/></g><g filter="url(#b8)"><polygon points="1000,800 1070,600 1200,520 1200,1700 1000,1700" fill="#151b23"/><ellipse cx="1130" cy="730" rx="75" ry="210" fill="#8c5c42"/><polygon points="545,830 610,690 760,640 900,700 1000,650 1070,810 1040,950 965,965 1055,1330 620,1365" fill="#b1632b"/><ellipse cx="690" cy="1000" rx="110" ry="300" fill="#c07034" opacity="0.7"/><rect x="620" y="1330" width="345" height="95" fill="#276a9c"/><rect x="650" y="1420" width="310" height="280" fill="#13171b"/><polygon points="840,760 930,780 940,1100 880,1000" fill="#2a6a92"/><polygon points="700,630 800,760 960,1100 1035,1510 960,1530 900,1100 760,770" fill="#c65a3a"/><ellipse cx="815" cy="545" rx="125" ry="110" fill="#5b3b31"/><ellipse cx="855" cy="625" rx="70" ry="92" fill="#dcab93"/><ellipse cx="930" cy="640" rx="50" ry="60" fill="#d09a80"/><ellipse cx="785" cy="1375" rx="40" ry="45" fill="#d8a890"/></g></g></g>
<rect x="1563.0" y="201.0" width="699.0" height="989.0" fill="#222a36" opacity="0.93"/>
<rect x="279" y="300" width="603" height="389" fill="none" stroke="#f6831f" stroke-width="22"/>
<text x="445.0" y="530.0" font-size="99.0" fill="#404040" textLength="258.0" lengthAdjust="spacing">3849</text>
<text x="295.0" y="835.3" font-size="28.0" fill="#5e5e5e" textLength="383.0" lengthAdjust="spacingAndGlyphs">Far far away, behind the word</text>
<text x="295.0" y="873.3" font-size="28.0" fill="#5e5e5e" textLength="299.4" lengthAdjust="spacingAndGlyphs">mountains, far from the</text>
<text x="295.0" y="911.3" font-size="28.0" fill="#5e5e5e" textLength="276.8" lengthAdjust="spacingAndGlyphs">countries Vokalia and</text>
<text x="295.0" y="949.3" font-size="28.0" fill="#5e5e5e" textLength="346.4" lengthAdjust="spacingAndGlyphs">Consonantia, there live the</text>
<text x="295.0" y="987.3" font-size="28.0" fill="#5e5e5e" textLength="396.5" lengthAdjust="spacingAndGlyphs">blind texts. Separated they live</text>
<text x="295.0" y="1025.3" font-size="28.0" fill="#5e5e5e" textLength="394.9" lengthAdjust="spacingAndGlyphs">in Bookmarksgrove right at the</text>
<text x="295.0" y="1063.3" font-size="28.0" fill="#5e5e5e" textLength="399.7" lengthAdjust="spacingAndGlyphs">coast of the Semantics, a large</text>
<text x="1686.0" y="296.0" font-size="19.0" fill="#ffffff" font-style="italic" textLength="84.0" lengthAdjust="spacingAndGlyphs">About Us</text>
<rect x="1677.0" y="312.0" width="273.0" height="2.0" fill="#6b7480" />
<rect x="1677.0" y="311.0" width="48.0" height="4.0" fill="#f6831f" />
<rect x="1934.0" y="286.5" width="18.0" height="5.0" fill="#ef8a3c" />
<rect x="1940.5" y="280.0" width="5.0" height="18.0" fill="#ef8a3c" />
<text x="1677.0" y="479.0" font-size="100.0" fill="#ffffff" font-weight="bold" textLength="333.0" lengthAdjust="spacingAndGlyphs">WE ARE</text>
<text x="1677.0" y="609.0" font-size="100.0" fill="#ffffff" font-weight="bold" textLength="456.0" lengthAdjust="spacingAndGlyphs">AWESOME</text>
<text x="1677.0" y="739.0" font-size="100.0" fill="#ffffff" font-weight="bold" textLength="248.0" lengthAdjust="spacingAndGlyphs">TEAM</text>
<polygon points="1675.0,795.0 1751.0,795.0 1675.0,871.0" fill="#f6831f" />
<text x="1685.0" y="958.5" font-size="21.0" fill="#ffffff" font-style="italic" textLength="500.0" lengthAdjust="spacingAndGlyphs">Far far away, behind the word mountains, far from the</text>
<text x="1685.0" y="986.3" font-size="21.0" fill="#ffffff" font-style="italic" textLength="507.9" lengthAdjust="spacingAndGlyphs">countries Vokalia and Consonantia, there live the blind</text>
<text x="1685.0" y="1014.1" font-size="21.0" fill="#ffffff" font-style="italic" textLength="50.4" lengthAdjust="spacingAndGlyphs">texts.</text>
<text x="1685.0" y="1069.5" font-size="21.0" fill="#ffffff" font-style="italic" textLength="116.0" lengthAdjust="spacingAndGlyphs">- The Quotes</text>
</svg>
<svg style="left:653px;top:380px" width="660" height="400" viewBox="0 0 2351 1425">
<text x="151.0" y="159.0" font-size="27.0" fill="#0d0d0d" textLength="287.0" lengthAdjust="spacingAndGlyphs">Presentation template</text>
<polygon points="2152.0,85.0 2266.0,85.0 2266.0,199.0" fill="#f6831f" />
<rect x="147.0" y="1141.0" width="12.0" height="115.0" fill="#e3e3e3" />
<rect x="147.0" y="1244.0" width="117.0" height="12.0" fill="#e3e3e3" />
<text x="2224.0" y="1279.5" font-size="27.0" fill="#0d0d0d" text-anchor="end" textLength="287.0" lengthAdjust="spacingAndGlyphs">Presentation template</text>
<clipPath id="c8"><rect x="210.0" y="201.0" width="1937.0" height="989.0"/></clipPath>
<g clip-path="url(#c8)"><g transform="translate(177.74,177.21) scale(0.84882,0.84966)"><g filter="url(#b40)"><rect x="-200" y="-200" width="2800" height="1700" fill="#1b1f1f"/><ellipse cx="1050" cy="520" rx="1150" ry="620" fill="#393f3c"/><ellipse cx="1000" cy="500" rx="760" ry="420" fill="#4c534f"/><ellipse cx="1500" cy="450" rx="520" ry="320" fill="#4a514d"/><ellipse cx="2280" cy="600" rx="150" ry="700" fill="#0e1011"/><ellipse cx="40" cy="750" rx="130" ry="600" fill="#181c1c"/><rect x="-200" y="1070" width="2800" height="430" fill="#131616"/><rect x="-200" y="-200" width="2800" height="260" fill="#25292a"/></g><g filter="url(#b5)"><polygon points="200,240 330,290 440,400 420,585 205,575 225,360" fill="#9a9a91"/><polygon points="160,180 230,170 300,230 330,300 250,300" fill="#9a9a91"/><ellipse cx="410" cy="290" rx="78" ry="62" fill="#a4a49b"/><ellipse cx="405" cy="350" rx="40" ry="35" fill="#b89078"/><polygon points="430,440 610,540 590,570 420,520" fill="#8c8c80"/><polygon points="205,600 410,600 565,660 425,765 305,900 425,1010 385,1045 205,900" fill="#14181e"/><ellipse cx="415" cy="1065" rx="32" ry="70" fill="#d6d1c9" transform="rotate(10 415 1065)"/><ellipse cx="640" cy="565" rx="28" ry="14" fill="#b8957f"/><polygon points="1140,320 1232,320 1242,560 1372,560 1545,680 1525,735 1300,735 1160,655" fill="#171b21"/><ellipse cx="1172" cy="282" rx="52" ry="36" fill="#d2cec6" transform="rotate(15 1172 282)"/><ellipse cx="1357" cy="522" rx="36" ry="58" fill="#dad6ce" transform="rotate(15 1357 522)"/><polygon points="950,520 1012,560 1062,740 1172,690 1262,760 1252,950 1102,1035 1002,945 982,765" fill="#8a8a80"/><polygon points="1090,1020 1150,1020 1150,1160 1100,1160" fill="#6f6f66"/><ellipse cx="925" cy="850" rx="52" ry="50" fill="#3a2c22"/><ellipse cx="950" cy="920" rx="42" ry="35" fill="#c8a890"/><ellipse cx="910" cy="465" rx="40" ry="38" fill="#b8957f"/><polygon points="1990,235 2180,65 2245,40 2245,105 2172,300 2182,425 2000,435" fill="#99998f"/><ellipse cx="2040" cy="135" rx="72" ry="72" fill="#a0a097"/><ellipse cx="2052" cy="200" rx="36" ry="36" fill="#b08870"/><polygon points="1690,270 1830,292 1990,240 2000,312 1830,332 1700,322" fill="#9d9d93"/><polygon points="1990,440 2182,440 2212,700 2082,892 2040,872 2102,692 1962,582 1762,642 1742,582 1942,482" fill="#13171d"/><ellipse cx="1690" cy="632" rx="46" ry="40" fill="#dad6ce"/><ellipse cx="2035" cy="962" rx="34" ry="72" fill="#cac6ba" transform="rotate(-20 2035 962)"/></g></g></g>
<rect x="210.0" y="201.0" width="1937.0" height="989.0" fill="#14202e" opacity="0.52"/>
<text x="370.0" y="458.0" font-size="36.0" fill="#ffffff" font-weight="bold" textLength="163.0" lengthAdjust="spacingAndGlyphs">YOUR TITLE</text>
<text x="370.0" y="502.5" font-size="21.0" fill="#f4f4f4" textLength="278.0" lengthAdjust="spacingAndGlyphs">Far far away, behind the word</text>
<text x="370.0" y="529.8" font-size="21.0" fill="#f4f4f4" textLength="217.3" lengthAdjust="spacingAndGlyphs">mountains, far from the</text>
<text x="370.0" y="557.1" font-size="21.0" fill="#f4f4f4" textLength="200.9" lengthAdjust="spacingAndGlyphs">countries Vokalia and</text>
<text x="370.0" y="584.4" font-size="21.0" fill="#f4f4f4" textLength="118.7" lengthAdjust="spacingAndGlyphs">Consonantia</text>
<rect x="370.0" y="633.5" width="46.0" height="3.0" fill="#f6831f" opacity="0.35"/>
<text x="370.0" y="802.0" font-size="36.0" fill="#ffffff" font-weight="bold" textLength="163.0" lengthAdjust="spacingAndGlyphs">YOUR TITLE</text>
<text x="370.0" y="846.5" font-size="21.0" fill="#f4f4f4" textLength="278.0" lengthAdjust="spacingAndGlyphs">Far far away, behind the word</text>
<text x="370.0" y="873.8" font-size="21.0" fill="#f4f4f4" textLength="217.3" lengthAdjust="spacingAndGlyphs">mountains, far from the</text>
<text x="370.0" y="901.1" font-size="21.0" fill="#f4f4f4" textLength="200.9" lengthAdjust="spacingAndGlyphs">countries Vokalia and</text>
<text x="370.0" y="928.4" font-size="21.0" fill="#f4f4f4" textLength="118.7" lengthAdjust="spacingAndGlyphs">Consonantia</text>
<rect x="370.0" y="981.5" width="46.0" height="3.0" fill="#f6831f" opacity="0.7"/>
<text x="758.0" y="458.0" font-size="36.0" fill="#ffffff" font-weight="bold" textLength="163.0" lengthAdjust="spacingAndGlyphs">YOUR TITLE</text>
<text x="758.0" y="502.5" font-size="21.0" fill="#f4f4f4" textLength="278.0" lengthAdjust="spacingAndGlyphs">Far far away, behind the word</text>
<text x="758.0" y="529.8" font-size="21.0" fill="#f4f4f4" textLength="217.3" lengthAdjust="spacingAndGlyphs">mountains, far from the</text>
<text x="758.0" y="557.1" font-size="21.0" fill="#f4f4f4" textLength="200.9" lengthAdjust="spacingAndGlyphs">countries Vokalia and</text>
<text x="758.0" y="584.4" font-size="21.0" fill="#f4f4f4" textLength="118.7" lengthAdjust="spacingAndGlyphs">Consonantia</text>
<rect x="758.0" y="633.5" width="46.0" height="3.0" fill="#f6831f" opacity="0.35"/>
<text x="758.0" y="802.0" font-size="36.0" fill="#ffffff" font-weight="bold" textLength="163.0" lengthAdjust="spacingAndGlyphs">YOUR TITLE</text>
<text x="758.0" y="846.5" font-size="21.0" fill="#f4f4f4" textLength="278.0" lengthAdjust="spacingAndGlyphs">Far far away, behind the word</text>
<text x="758.0" y="873.8" font-size="21.0" fill="#f4f4f4" textLength="217.3" lengthAdjust="spacingAndGlyphs">mountains, far from the</text>
<text x="758.0" y="901.1" font-size="21.0" fill="#f4f4f4" textLength="200.9" lengthAdjust="spacingAndGlyphs">countries Vokalia and</text>
<text x="758.0" y="928.4" font-size="21.0" fill="#f4f4f4" textLength="118.7" lengthAdjust="spacingAndGlyphs">Consonantia</text>
<rect x="758.0" y="981.5" width="46.0" height="3.0" fill="#f6831f" opacity="0.7"/>
<text x="1148.0" y="458.0" font-size="36.0" fill="#ffffff" font-weight="bold" textLength="163.0" lengthAdjust="spacingAndGlyphs">YOUR TITLE</text>
<text x="1148.0" y="502.5" font-size="21.0" fill="#f4f4f4" textLength="278.0" lengthAdjust="spacingAndGlyphs">Far far away, behind the word</text>
<text x="1148.0" y="529.8" font-size="21.0" fill="#f4f4f4" textLength="217.3" lengthAdjust="spacingAndGlyphs">mountains, far from the</text>
<text x="1148.0" y="557.1" font-size="21.0" fill="#f4f4f4" textLength="200.9" lengthAdjust="spacingAndGlyphs">countries Vokalia and</text>
<text x="1148.0" y="584.4" font-size="21.0" fill="#f4f4f4" textLength="118.7" lengthAdjust="spacingAndGlyphs">Consonantia</text>
<rect x="1148.0" y="633.5" width="46.0" height="3.0" fill="#f6831f" opacity="0.35"/>
<text x="1148.0" y="802.0" font-size="36.0" fill="#ffffff" font-weight="bold" textLength="163.0" lengthAdjust="spacingAndGlyphs">YOUR TITLE</text>
<text x="1148.0" y="846.5" font-size="21.0" fill="#f4f4f4" textLength="278.0" lengthAdjust="spacingAndGlyphs">Far far away, behind the word</text>
<text x="1148.0" y="873.8" font-size="21.0" fill="#f4f4f4" textLength="217.3" lengthAdjust="spacingAndGlyphs">mountains, far from the</text>
<text x="1148.0" y="901.1" font-size="21.0" fill="#f4f4f4" textLength="200.9" lengthAdjust="spacingAndGlyphs">countries Vokalia and</text>
<text x="1148.0" y="928.4" font-size="21.0" fill="#f4f4f4" textLength="118.7" lengthAdjust="spacingAndGlyphs">Consonantia</text>
<rect x="1148.0" y="981.5" width="46.0" height="3.0" fill="#f6831f" opacity="0.7"/>
<text x="1663.0" y="341.0" font-size="19.0" fill="#ffffff" font-style="italic" textLength="84.0" lengthAdjust="spacingAndGlyphs">About Us</text>
<rect x="1654.0" y="357.0" width="250.0" height="2.0" fill="#6b7077" />
<rect x="1654.0" y="356.0" width="48.0" height="4.0" fill="#f6831f" />
<rect x="1911.0" y="331.5" width="18.0" height="5.0" fill="#ef8a3c" />
<rect x="1917.5" y="325.0" width="5.0" height="18.0" fill="#ef8a3c" />
<text x="1654.0" y="501.0" font-size="64.0" fill="#ffffff" font-weight="bold" textLength="201.0" lengthAdjust="spacingAndGlyphs">ABOUT</text>
<text x="1654.0" y="588.0" font-size="64.0" fill="#ffffff" font-weight="bold" textLength="146.3" lengthAdjust="spacingAndGlyphs">SLIDE</text>
<text x="1818.5" y="588.0" font-size="64.0" fill="#f6831f" font-weight="bold" textLength="149.5" lengthAdjust="spacingAndGlyphs">WITH</text>
<text x="1654.0" y="676.0" font-size="64.0" fill="#ffffff" font-weight="bold" textLength="186.0" lengthAdjust="spacingAndGlyphs"><tspan fill="#f6831f">DETAIL</tspan></text>
<text x="1654.0" y="762.0" font-size="64.0" fill="#ffffff" font-weight="bold" textLength="133.0" lengthAdjust="spacingAndGlyphs">TEXT</text>
<polygon points="1653.0,802.0 1695.0,802.0 1653.0,844.0" fill="#f6831f" />
<text x="1653.0" y="982.6" font-size="21.5" fill="#f4f4f4" textLength="281.7" lengthAdjust="spacingAndGlyphs">Far far away, behind the word</text>
<text x="1653.0" y="1009.8" font-size="21.5" fill="#f4f4f4" textLength="313.0" lengthAdjust="spacingAndGlyphs">mountains, far from the countries</text>
<text x="1653.0" y="1037.0" font-size="21.5" fill="#f4f4f4" textLength="335.7" lengthAdjust="spacingAndGlyphs">Vokalia and Consonantia, there live</text>
<text x="1653.0" y="1064.2" font-size="21.5" fill="#f4f4f4" textLength="138.1" lengthAdjust="spacingAndGlyphs">the blind texts.</text>
</svg>
<svg style="left:1307px;top:380px" width="660" height="400" viewBox="0 0 2351 1425">
<text x="147.0" y="159.0" font-size="27.0" fill="#0d0d0d" textLength="287.0" lengthAdjust="spacingAndGlyphs">Presentation template</text>
<polygon points="2148.0,85.0 2262.0,85.0 2262.0,199.0" fill="#f6831f" />
<rect x="143.0" y="1141.0" width="12.0" height="115.0" fill="#e3e3e3" />
<rect x="143.0" y="1244.0" width="117.0" height="12.0" fill="#e3e3e3" />
<text x="2220.0" y="1279.5" font-size="27.0" fill="#0d0d0d" text-anchor="end" textLength="287.0" lengthAdjust="spacingAndGlyphs">Presentation template</text>
<text x="309.0" y="400.5" font-size="21.0" fill="#555555" textLength="276.0" lengthAdjust="spacingAndGlyphs">Far far away, behind the word</text>
<text x="309.0" y="427.6" font-size="21.0" fill="#555555" textLength="215.7" lengthAdjust="spacingAndGlyphs">mountains, far from the</text>
<text x="309.0" y="454.8" font-size="21.0" fill="#555555" textLength="199.5" lengthAdjust="spacingAndGlyphs">countries Vokalia and</text>
<text x="309.0" y="481.9" font-size="21.0" fill="#555555" textLength="249.6" lengthAdjust="spacingAndGlyphs">Consonantia, there live the</text>
<text x="309.0" y="509.1" font-size="21.0" fill="#555555" textLength="285.7" lengthAdjust="spacingAndGlyphs">blind texts. Separated they live</text>
<text x="309.0" y="536.2" font-size="21.0" fill="#555555" textLength="284.5" lengthAdjust="spacingAndGlyphs">in Bookmarksgrove right at the</text>
<text x="309.0" y="563.4" font-size="21.0" fill="#555555" textLength="288.1" lengthAdjust="spacingAndGlyphs">coast of the Semantics, a large</text>
<text x="309.0" y="590.5" font-size="21.0" fill="#555555" textLength="274.1" lengthAdjust="spacingAndGlyphs">language ocean. A small river</text>
<text x="309.0" y="617.7" font-size="21.0" fill="#555555" textLength="260.1" lengthAdjust="spacingAndGlyphs">named Duden flows by their</text>
<text x="309.0" y="644.8" font-size="21.0" fill="#555555" textLength="268.3" lengthAdjust="spacingAndGlyphs">place and supplies it with the</text>
<text x="309.0" y="672.0" font-size="21.0" fill="#555555" textLength="191.3" lengthAdjust="spacingAndGlyphs">necessary regelialia.</text>
<text x="309.0" y="725.5" font-size="21.0" fill="#555555" textLength="295.7" lengthAdjust="spacingAndGlyphs">It is a paradisematic country, in</text>
<text x="309.0" y="752.7" font-size="21.0" fill="#555555" textLength="211.0" lengthAdjust="spacingAndGlyphs">which roasted parts of</text>
<text x="309.0" y="779.9" font-size="21.0" fill="#555555" textLength="286.5" lengthAdjust="spacingAndGlyphs">sentences fly into your mouth.</text>
<text x="309.0" y="807.1" font-size="21.0" fill="#555555" textLength="285.4" lengthAdjust="spacingAndGlyphs">Even the all-powerful Pointing</text>
<text x="309.0" y="834.3" font-size="21.0" fill="#555555" textLength="283.0" lengthAdjust="spacingAndGlyphs">has no control about the blind</text>
<text x="309.0" y="861.5" font-size="21.0" fill="#555555" textLength="183.4" lengthAdjust="spacingAndGlyphs">texts it is an almost</text>
<text x="309.0" y="888.7" font-size="21.0" fill="#555555" textLength="265.0" lengthAdjust="spacingAndGlyphs">unorthographic life One day</text>
<text x="309.0" y="915.9" font-size="21.0" fill="#555555" textLength="271.0" lengthAdjust="spacingAndGlyphs">however a small line of blind</text>
<text x="309.0" y="943.1" font-size="21.0" fill="#555555" textLength="250.6" lengthAdjust="spacingAndGlyphs">text by the name of Lorem</text>
<text x="309.0" y="970.3" font-size="21.0" fill="#555555" textLength="289.0" lengthAdjust="spacingAndGlyphs">Ipsum decided to leave for the</text>
<text x="309.0" y="997.5" font-size="21.0" fill="#555555" textLength="212.9" lengthAdjust="spacingAndGlyphs">far World of Grammar.</text>
<clipPath id="c9"><polygon points="805.8,695.7 934.6,433.9 1300.6,433.9 1429.4,695.7 1300.6,957.4 934.6,957.4"/></clipPath>
<g clip-path="url(#c9)"><g transform="translate(758.73,356.21) scale(0.40897,0.40897)"><g filter="url(#b12)"><rect x="-200" y="-200" width="2200" height="2000" fill="#2a323c"/><ellipse cx="450" cy="650" rx="380" ry="380" fill="#5f6b7c"/><ellipse cx="1500" cy="500" rx="200" ry="300" fill="#39424e"/><ellipse cx="880" cy="420" rx="270" ry="270" fill="#0b0b0f"/><ellipse cx="1350" cy="1020" rx="330" ry="470" fill="#0d0d13"/><polygon points="330,1050 600,850 900,780 920,950 770,1100 750,1500 420,1500" fill="#17171f"/><polygon points="880,950 1110,950 1090,1500 780,1500" fill="#b98a6a"/><polygon points="860,1000 915,1000 860,1500 745,1500" fill="#d9d9dc"/><ellipse cx="1075" cy="710" rx="195" ry="285" fill="#dcab8c"/><polygon points="830,470 1000,330 1360,250 1420,420 1330,620 1240,560 1020,440 870,560" fill="#a58462"/><ellipse cx="430" cy="1030" rx="95" ry="95" fill="#c08a78"/></g><g filter="url(#b5)"><ellipse cx="1000" cy="650" rx="60" ry="22" fill="#4a3a3a"/><ellipse cx="1200" cy="640" rx="50" ry="20" fill="#4a3a3a"/><ellipse cx="1120" cy="865" rx="80" ry="35" fill="#b86a64"/></g></g></g>
<polygon points="805.8,470.7 844.6,389.7 961.2,389.7 1000.0,470.7 961.2,551.7 844.6,551.7" fill="#f6831f"/>
<text x="903.0" y="481.0" font-size="36.0" fill="#fff3e6" text-anchor="middle" textLength="72.0" lengthAdjust="spacingAndGlyphs">mng</text>
<text x="1554.0" y="305.0" font-size="19.0" fill="#404040" font-style="italic" textLength="84.0" lengthAdjust="spacingAndGlyphs">About Us</text>
<rect x="1545.0" y="321.0" width="275.0" height="2.0" fill="#ebebeb" />
<rect x="1545.0" y="320.0" width="48.0" height="4.0" fill="#f6831f" />
<rect x="1802.0" y="295.5" width="18.0" height="5.0" fill="#ef8a3c" />
<rect x="1808.5" y="289.0" width="5.0" height="18.0" fill="#ef8a3c" />
<text x="1545.0" y="489.0" font-size="100.0" fill="#333333" font-weight="bold" textLength="333.0" lengthAdjust="spacingAndGlyphs">WE ARE</text>
<text x="1545.0" y="619.0" font-size="100.0" fill="#333333" font-weight="bold" textLength="456.0" lengthAdjust="spacingAndGlyphs">AWESOME</text>
<text x="1545.0" y="749.0" font-size="100.0" fill="#333333" font-weight="bold" textLength="248.0" lengthAdjust="spacingAndGlyphs">TEAM</text>
<polygon points="1544.0,803.0 1585.0,803.0 1544.0,844.0" fill="#f6831f" />
<text x="1553.0" y="990.5" font-size="21.0" fill="#4d4d4d" font-style="italic" textLength="500.0" lengthAdjust="spacingAndGlyphs">Far far away, behind the word mountains, far from the</text>
<text x="1553.0" y="1018.0" font-size="21.0" fill="#4d4d4d" font-style="italic" textLength="507.9" lengthAdjust="spacingAndGlyphs">countries Vokalia and Consonantia, there live the blind</text>
<text x="1553.0" y="1045.5" font-size="21.0" fill="#4d4d4d" font-style="italic" textLength="50.4" lengthAdjust="spacingAndGlyphs">texts.</text>
<text x="1553.0" y="1099.5" font-size="21.0" fill="#4d4d4d" font-style="italic" textLength="116.0" lengthAdjust="spacingAndGlyphs">- The Quotes</text>
</svg>
<svg style="left:1961px;top:380px" width="660" height="400" viewBox="0 0 2351 1425">
<text x="147.0" y="159.0" font-size="27.0" fill="#0d0d0d" textLength="287.0" lengthAdjust="spacingAndGlyphs">Presentation template</text>
<polygon points="2148.0,85.0 2262.0,85.0 2262.0,199.0" fill="#f6831f" />
<rect x="143.0" y="1141.0" width="12.0" height="115.0" fill="#e3e3e3" />
<rect x="143.0" y="1244.0" width="117.0" height="12.0" fill="#e3e3e3" />
<text x="2220.0" y="1279.5" font-size="27.0" fill="#0d0d0d" text-anchor="end" textLength="287.0" lengthAdjust="spacingAndGlyphs">Presentation template</text>
<clipPath id="c10"><rect x="207.0" y="201.0" width="1937.0" height="989.0"/></clipPath>
<g clip-path="url(#c10)"><g transform="translate(174.74,177.21) scale(0.84882,0.84966)"><g filter="url(#b40)"><rect x="-200" y="-200" width="2800" height="1700" fill="#1b1f1f"/><ellipse cx="1050" cy="520" rx="1150" ry="620" fill="#393f3c"/><ellipse cx="1000" cy="500" rx="760" ry="420" fill="#4c534f"/><ellipse cx="1500" cy="450" rx="520" ry="320" fill="#4a514d"/><ellipse cx="2280" cy="600" rx="150" ry="700" fill="#0e1011"/><ellipse cx="40" cy="750" rx="130" ry="600" fill="#181c1c"/><rect x="-200" y="1070" width="2800" height="430" fill="#131616"/><rect x="-200" y="-200" width="2800" height="260" fill="#25292a"/></g><g filter="url(#b5)"><polygon points="200,240 330,290 440,400 420,585 205,575 225,360" fill="#9a9a91"/><polygon points="160,180 230,170 300,230 330,300 250,300" fill="#9a9a91"/><ellipse cx="410" cy="290" rx="78" ry="62" fill="#a4a49b"/><ellipse cx="405" cy="350" rx="40" ry="35" fill="#b89078"/><polygon points="430,440 610,540 590,570 420,520" fill="#8c8c80"/><polygon points="205,600 410,600 565,660 425,765 305,900 425,1010 385,1045 205,900" fill="#14181e"/><ellipse cx="415" cy="1065" rx="32" ry="70" fill="#d6d1c9" transform="rotate(10 415 1065)"/><ellipse cx="640" cy="565" rx="28" ry="14" fill="#b8957f"/><polygon points="1140,320 1232,320 1242,560 1372,560 1545,680 1525,735 1300,735 1160,655" fill="#171b21"/><ellipse cx="1172" cy="282" rx="52" ry="36" fill="#d2cec6" transform="rotate(15 1172 282)"/><ellipse cx="1357" cy="522" rx="36" ry="58" fill="#dad6ce" transform="rotate(15 1357 522)"/><polygon points="950,520 1012,560 1062,740 1172,690 1262,760 1252,950 1102,1035 1002,945 982,765" fill="#8a8a80"/><polygon points="1090,1020 1150,1020 1150,1160 1100,1160" fill="#6f6f66"/><ellipse cx="925" cy="850" rx="52" ry="50" fill="#3a2c22"/><ellipse cx="950" cy="920" rx="42" ry="35" fill="#c8a890"/><ellipse cx="910" cy="465" rx="40" ry="38" fill="#b8957f"/><polygon points="1990,235 2180,65 2245,40 2245,105 2172,300 2182,425 2000,435" fill="#99998f"/><ellipse cx="2040" cy="135" rx="72" ry="72" fill="#a0a097"/><ellipse cx="2052" cy="200" rx="36" ry="36" fill="#b08870"/><polygon points="1690,270 1830,292 1990,240 2000,312 1830,332 1700,322" fill="#9d9d93"/><polygon points="1990,440 2182,440 2212,700 2082,892 2040,872 2102,692 1962,582 1762,642 1742,582 1942,482" fill="#13171d"/><ellipse cx="1690" cy="632" rx="46" ry="40" fill="#dad6ce"/><ellipse cx="2035" cy="962" rx="34" ry="72" fill="#cac6ba" transform="rotate(-20 2035 962)"/></g></g></g>
<text x="1932.0" y="575.0" font-size="154.0" fill="#a9adab" font-weight="bold" text-anchor="end" textLength="562.0" lengthAdjust="spacingAndGlyphs" opacity="0.42">WE ARE</text>
<text x="1932.0" y="793.0" font-size="154.0" fill="#a9adab" font-weight="bold" text-anchor="end" textLength="769.0" lengthAdjust="spacingAndGlyphs" opacity="0.42">AWESOME</text>
<text x="1932.0" y="1010.0" font-size="154.0" fill="#a9adab" font-weight="bold" text-anchor="end" textLength="422.0" lengthAdjust="spacingAndGlyphs" opacity="0.42">TEAM</text>
<text x="434.0" y="361.0" font-size="19.0" fill="#ffffff" font-style="italic" textLength="84.0" lengthAdjust="spacingAndGlyphs">About Us</text>
<rect x="425.0" y="377.0" width="273.0" height="2.0" fill="#8a8f8c" />
<rect x="425.0" y="376.0" width="48.0" height="4.0" fill="#f6831f" />
<rect x="682.0" y="351.5" width="18.0" height="5.0" fill="#ef8a3c" />
<rect x="688.5" y="345.0" width="5.0" height="18.0" fill="#ef8a3c" />
<text x="427.0" y="640.0" font-size="100.0" fill="#ffffff" font-weight="bold" textLength="325.0" lengthAdjust="spacingAndGlyphs">CENTER</text>
<text x="427.0" y="770.0" font-size="100.0" fill="#ffffff" font-weight="bold" textLength="358.0" lengthAdjust="spacingAndGlyphs"><tspan fill="#f6831f">PICTURE</tspan></text>
<text x="427.0" y="900.0" font-size="100.0" fill="#ffffff" font-weight="bold" textLength="228.0" lengthAdjust="spacingAndGlyphs">SLIDE</text>
<polygon points="423.0,955.0 465.0,955.0 423.0,997.0" fill="#f6831f" />
</svg>
<svg style="left:0px;top:765px" width="660" height="400" viewBox="0 0 2351 1425">
<text x="147.0" y="151.8" font-size="27.0" fill="#0d0d0d" textLength="287.0" lengthAdjust="spacingAndGlyphs">Presentation template</text>
<rect x="2144.6" y="77.8" width="117.4" height="114.0" fill="#f6831f" />
<path d="M2175.9,152.1 L2231.9,152.1 L2205.9,130.9 M2175.9,152.1 L2211.9,119.5 L2184.1,119.5 L2184.1,144.4" fill="none" stroke="#fff1dc" stroke-width="4.6" stroke-linejoin="miter"/>
<rect x="143.0" y="1130.0" width="12.0" height="115.0" fill="#e3e3e3" />
<rect x="143.0" y="1233.0" width="117.0" height="12.0" fill="#e3e3e3" />
<text x="2220.0" y="1268.5" font-size="27.0" fill="#0d0d0d" text-anchor="end" textLength="287.0" lengthAdjust="spacingAndGlyphs">Presentation template</text>
<rect x="207.0" y="193.0" width="1937.0" height="987.0" fill="#222935" />
<text x="347.0" y="333.0" font-size="19.0" fill="#ffffff" font-style="italic" textLength="84.0" lengthAdjust="spacingAndGlyphs">About Us</text>
<rect x="338.0" y="349.0" width="275.0" height="2.0" fill="#59606b" />
<rect x="338.0" y="348.0" width="48.0" height="4.0" fill="#f6831f" />
<rect x="595.0" y="323.5" width="18.0" height="5.0" fill="#ef8a3c" />
<rect x="601.5" y="317.0" width="5.0" height="18.0" fill="#ef8a3c" />
<text x="338.0" y="492.0" font-size="64.0" fill="#ffffff" font-weight="bold" textLength="232.0" lengthAdjust="spacingAndGlyphs">CENTER</text>
<text x="338.0" y="579.0" font-size="64.0" fill="#ffffff" font-weight="bold" textLength="254.0" lengthAdjust="spacingAndGlyphs">PICTURE</text>
<text x="338.0" y="666.0" font-size="64.0" fill="#ffffff" font-weight="bold" textLength="161.2" lengthAdjust="spacingAndGlyphs">SLIDE</text>
<text x="519.3" y="666.0" font-size="64.0" fill="#f6831f" font-weight="bold" textLength="164.7" lengthAdjust="spacingAndGlyphs">WITH</text>
<text x="338.0" y="753.0" font-size="64.0" fill="#ffffff" font-weight="bold" textLength="146.0" lengthAdjust="spacingAndGlyphs">TEXT</text>
<polygon points="337.0,793.0 379.0,793.0 337.0,835.0" fill="#f6831f" />
<text x="337.0" y="973.6" font-size="21.5" fill="#f4f4f4" textLength="281.7" lengthAdjust="spacingAndGlyphs">Far far away, behind the word</text>
<text x="337.0" y="1000.8" font-size="21.5" fill="#f4f4f4" textLength="313.0" lengthAdjust="spacingAndGlyphs">mountains, far from the countries</text>
<text x="337.0" y="1028.0" font-size="21.5" fill="#f4f4f4" textLength="335.7" lengthAdjust="spacingAndGlyphs">Vokalia and Consonantia, there live</text>
<text x="337.0" y="1055.2" font-size="21.5" fill="#f4f4f4" textLength="138.1" lengthAdjust="spacingAndGlyphs">the blind texts.</text>
<text x="955.0" y="394.7" font-size="22.0" fill="#f4f4f4" textLength="388.0" lengthAdjust="spacingAndGlyphs">Far far away, behind the word mountains,</text>
<text x="955.0" y="435.3" font-size="22.0" fill="#f4f4f4" textLength="315.4" lengthAdjust="spacingAndGlyphs">far from the countries Vokalia and</text>
<text x="955.0" y="475.9" font-size="22.0" fill="#f4f4f4" textLength="359.0" lengthAdjust="spacingAndGlyphs">Consonantia, there live the blind texts.</text>
<text x="955.0" y="516.5" font-size="22.0" fill="#f4f4f4" textLength="368.4" lengthAdjust="spacingAndGlyphs">Separated they live in Bookmarksgrove</text>
<text x="955.0" y="557.1" font-size="22.0" fill="#f4f4f4" textLength="396.6" lengthAdjust="spacingAndGlyphs">right at the coast of the Semantics, a large</text>
<text x="955.0" y="597.7" font-size="22.0" fill="#f4f4f4" textLength="347.2" lengthAdjust="spacingAndGlyphs">language ocean. A small river named</text>
<text x="955.0" y="638.3" font-size="22.0" fill="#f4f4f4" textLength="389.6" lengthAdjust="spacingAndGlyphs">Duden flows by their place and supplies it</text>
<text x="955.0" y="678.9" font-size="22.0" fill="#f4f4f4" textLength="271.9" lengthAdjust="spacingAndGlyphs">with the necessary regelialia.</text>
<text x="955.0" y="759.7" font-size="22.0" fill="#f4f4f4" textLength="349.6" lengthAdjust="spacingAndGlyphs">It is a paradisematic country, in which</text>
<text x="955.0" y="800.3" font-size="22.0" fill="#f4f4f4" textLength="363.0" lengthAdjust="spacingAndGlyphs">roasted parts of sentences fly into your</text>
<text x="955.0" y="840.9" font-size="22.0" fill="#f4f4f4" textLength="390.0" lengthAdjust="spacingAndGlyphs">mouth. Even the all-powerful Pointing has</text>
<text x="955.0" y="881.5" font-size="22.0" fill="#f4f4f4" textLength="354.8" lengthAdjust="spacingAndGlyphs">no control about the blind texts it is an</text>
<text x="955.0" y="922.1" font-size="22.0" fill="#f4f4f4" textLength="327.7" lengthAdjust="spacingAndGlyphs">almost unorthographic life One day</text>
<text x="955.0" y="962.7" font-size="22.0" fill="#f4f4f4" textLength="368.8" lengthAdjust="spacingAndGlyphs">however a small line of blind text by the</text>
<text x="955.0" y="1003.3" font-size="22.0" fill="#f4f4f4" textLength="395.9" lengthAdjust="spacingAndGlyphs">name of Lorem Ipsum decided to leave for</text>
<text x="955.0" y="1043.9" font-size="22.0" fill="#f4f4f4" textLength="243.9" lengthAdjust="spacingAndGlyphs">the far World of Grammar.</text>
<clipPath id="c11"><rect x="1579.0" y="259.0" width="456.0" height="853.0"/></clipPath>
<g clip-path="url(#c11)"><g transform="translate(1531.43,232.98) scale(0.58015,0.57831)"><g filter="url(#b9)"><rect x="-200" y="-200" width="1400" height="2000" fill="#6c6c6a"/><ellipse cx="700" cy="250" rx="250" ry="300" fill="#7c7c7a"/><ellipse cx="120" cy="1200" rx="150" ry="400" fill="#727270"/><polygon points="82,590 300,460 500,400 620,320 800,500 900,600 900,1600 300,1600 320,1380 140,1300 200,850 60,850" fill="#0d0d0f"/><ellipse cx="320" cy="135" rx="245" ry="110" fill="#1d1511"/><ellipse cx="520" cy="180" rx="60" ry="150" fill="#1d1511"/><ellipse cx="345" cy="285" rx="120" ry="150" fill="#d2aa92"/><ellipse cx="470" cy="200" rx="30" ry="50" fill="#c89a82"/><rect x="320" y="1420" width="580" height="180" fill="#232b39"/></g><g filter="url(#b4)"><polygon points="205,570 300,480 322,720 272,742" fill="#e6e6e6"/><polygon points="165,630 225,600 265,745 215,765" fill="#5a2222"/><ellipse cx="665" cy="750" rx="50" ry="28" fill="#c4c4c4"/><ellipse cx="720" cy="840" rx="40" ry="22" fill="#8a8a8a"/><ellipse cx="680" cy="1420" rx="130" ry="20" fill="#a8a070" opacity="0.8"/><rect x="780" y="970" width="80" height="60" fill="#b0b0b0"/><ellipse cx="300" cy="230" rx="50" ry="15" fill="#3a2a22"/></g></g></g>
</svg>
<svg style="left:653px;top:765px" width="660" height="400" viewBox="0 0 2351 1425">
<rect x="210.0" y="193.0" width="1937.0" height="988.0" fill="#f3f3f3" />
<text x="151.0" y="151.8" font-size="27.0" fill="#0d0d0d" textLength="287.0" lengthAdjust="spacingAndGlyphs">Presentation template</text>
<polygon points="2152.0,77.8 2266.0,77.8 2266.0,191.8" fill="#f6831f" />
<rect x="147.0" y="1130.0" width="12.0" height="115.0" fill="#e3e3e3" />
<rect x="147.0" y="1233.0" width="117.0" height="12.0" fill="#e3e3e3" />
<text x="2224.0" y="1268.5" font-size="27.0" fill="#0d0d0d" text-anchor="end" textLength="287.0" lengthAdjust="spacingAndGlyphs">Presentation template</text>
<clipPath id="c12"><rect x="280.0" y="259.0" width="1130.0" height="852.0"/></clipPath>
<g clip-path="url(#c12)"><g transform="translate(255.64,231.18) scale(0.58008,0.57959)"><g filter="url(#b30)"><rect x="-200" y="-200" width="2500" height="2000" fill="#2c3a44"/><ellipse cx="1250" cy="950" rx="800" ry="700" fill="#445861"/><ellipse cx="1450" cy="1050" rx="450" ry="450" fill="#5a7079"/><rect x="1850" y="-200" width="450" height="2000" fill="#2a343e" opacity="0.7"/><rect x="-200" y="-200" width="2500" height="350" fill="#27323b" opacity="0.6"/></g><g filter="url(#b9)"><polygon points="540,900 690,760 900,700 1050,620 1250,650 1345,780 1255,1000 1400,1150 1555,1290 1450,1600 505,1600" fill="#c3ced8"/><ellipse cx="980" cy="900" rx="260" ry="210" fill="#eef1f5"/><ellipse cx="850" cy="1300" rx="220" ry="280" fill="#dfe5ec"/><ellipse cx="1250" cy="1350" rx="180" ry="200" fill="#d3dbe3"/><polygon points="1200,600 1330,330 1520,200 1612,285 1602,550 1560,660 1470,765 1350,785" fill="#eef1f5"/><ellipse cx="1500" cy="560" rx="90" ry="110" fill="#c3d1de"/><polygon points="680,650 740,480 835,450 845,700 700,765" fill="#dcdfe4"/><polygon points="830,560 960,430 1060,470 1180,600 1440,810 1420,850 1150,700 900,700" fill="#8d644c"/><ellipse cx="965" cy="340" rx="140" ry="120" fill="#1b1513"/><ellipse cx="900" cy="520" rx="75" ry="115" fill="#1b1513"/><ellipse cx="780" cy="250" rx="110" ry="30" fill="#2a2220" opacity="0.6"/><ellipse cx="940" cy="262" rx="50" ry="50" fill="#caa999"/><ellipse cx="1470" cy="835" rx="55" ry="28" fill="#c9a191"/><ellipse cx="820" cy="1250" rx="90" ry="240" fill="#c4b4bc" opacity="0.5"/></g></g></g>
<rect x="280.0" y="259.0" width="132.0" height="852.0" fill="#252c39" />
<g transform="translate(363,943) rotate(-90)"><text x="0.0" y="0.0" font-size="38.0" fill="#ffffff" textLength="515.0" lengthAdjust="spacingAndGlyphs"><tspan fill="#ffffff">Right Picture </tspan><tspan fill="#f6831f">Slide With</tspan><tspan fill="#ffffff"> Text</tspan></text>
</g>
<text x="1581.0" y="333.0" font-size="19.0" fill="#404040" font-style="italic" textLength="84.0" lengthAdjust="spacingAndGlyphs">About Us</text>
<rect x="1572.0" y="349.0" width="275.0" height="2.0" fill="#ebebeb" />
<rect x="1572.0" y="348.0" width="48.0" height="4.0" fill="#e0584a" />
<rect x="1829.0" y="323.5" width="18.0" height="5.0" fill="#ef8a3c" />
<rect x="1835.5" y="317.0" width="5.0" height="18.0" fill="#ef8a3c" />
<text x="1572.0" y="492.0" font-size="64.0" fill="#262626" font-weight="bold" textLength="171.0" lengthAdjust="spacingAndGlyphs">RIGHT</text>
<text x="1572.0" y="579.0" font-size="64.0" fill="#262626" font-weight="bold" textLength="232.0" lengthAdjust="spacingAndGlyphs">PICTURE</text>
<text x="1572.0" y="666.0" font-size="64.0" fill="#262626" font-weight="bold" textLength="313.0" lengthAdjust="spacingAndGlyphs">SLIDE WITH</text>
<text x="1572.0" y="753.0" font-size="64.0" fill="#262626" font-weight="bold" textLength="133.0" lengthAdjust="spacingAndGlyphs">TEXT</text>
<polygon points="1570.0,793.0 1612.0,793.0 1570.0,835.0" fill="#f6831f" />
<text x="1570.0" y="973.6" font-size="21.5" fill="#6a6a6a" textLength="281.7" lengthAdjust="spacingAndGlyphs">Far far away, behind the word</text>
<text x="1570.0" y="1000.8" font-size="21.5" fill="#6a6a6a" textLength="313.0" lengthAdjust="spacingAndGlyphs">mountains, far from the countries</text>
<text x="1570.0" y="1028.0" font-size="21.5" fill="#6a6a6a" textLength="335.7" lengthAdjust="spacingAndGlyphs">Vokalia and Consonantia, there live</text>
<text x="1570.0" y="1055.2" font-size="21.5" fill="#6a6a6a" textLength="138.1" lengthAdjust="spacingAndGlyphs">the blind texts.</text>
</svg>
<svg style="left:1307px;top:765px" width="660" height="400" viewBox="0 0 2351 1425">
<text x="147.0" y="170.0" font-size="27.0" fill="#0d0d0d" textLength="287.0" lengthAdjust="spacingAndGlyphs">Presentation template</text>
<polygon points="2148.0,96.0 2262.0,96.0 2262.0,210.0" fill="#f6831f" />
<rect x="143.0" y="1152.0" width="12.0" height="115.0" fill="#e3e3e3" />
<rect x="143.0" y="1255.0" width="117.0" height="12.0" fill="#e3e3e3" />
<text x="2220.0" y="1290.5" font-size="27.0" fill="#0d0d0d" text-anchor="end" textLength="287.0" lengthAdjust="spacingAndGlyphs">Presentation template</text>
<clipPath id="c13"><rect x="204.0" y="212.0" width="1452.0" height="989.0"/></clipPath>
<g clip-path="url(#c13)"><g transform="translate(369.33,154.49) scale(0.71881,0.70998)"><g filter="url(#b14)"><rect x="-400" y="-400" width="2400" height="2400" fill="#666666"/><rect x="265" y="-100" width="1000" height="840" fill="#4c4c4c"/><ellipse cx="782" cy="1420" rx="700" ry="330" fill="#c6c6c6"/><ellipse cx="782" cy="1560" rx="600" ry="250" fill="#dedede"/><polygon points="660,900 910,900 960,1200 600,1200" fill="#8e8e8e"/><polygon points="100,900 230,820 215,500 300,420 350,820 300,930 130,1010" fill="#d2d2d2"/><polygon points="1460,900 1330,820 1345,500 1260,420 1210,820 1260,930 1430,1010" fill="#d2d2d2"/><ellipse cx="785" cy="420" rx="245" ry="195" fill="#1b1b1b"/><ellipse cx="778" cy="660" rx="205" ry="320" fill="#d4d4d4"/><ellipse cx="778" cy="470" rx="150" ry="110" fill="#f1f1f1"/><ellipse cx="778" cy="1000" rx="120" ry="60" fill="#555555"/></g><g filter="url(#b6)"><ellipse cx="660" cy="628" rx="55" ry="24" fill="#2e2e2e"/><ellipse cx="882" cy="628" rx="55" ry="24" fill="#2e2e2e"/><ellipse cx="650" cy="575" rx="70" ry="12" fill="#4a4a4a"/><ellipse cx="895" cy="575" rx="70" ry="12" fill="#4a4a4a"/><ellipse cx="775" cy="868" rx="82" ry="30" fill="#7d7d7d"/><ellipse cx="772" cy="770" rx="55" ry="30" fill="#9a9a9a"/></g><g filter="url(#b2)"><rect x="285" y="90" width="7" height="645" fill="#c8c8c8" opacity="0.55"/><rect x="321" y="90" width="7" height="645" fill="#c8c8c8" opacity="0.55"/><rect x="357" y="90" width="7" height="645" fill="#c8c8c8" opacity="0.55"/><rect x="393" y="90" width="7" height="645" fill="#c8c8c8" opacity="0.55"/><rect x="429" y="90" width="7" height="645" fill="#c8c8c8" opacity="0.55"/><rect x="465" y="90" width="7" height="645" fill="#c8c8c8" opacity="0.55"/><rect x="501" y="90" width="7" height="645" fill="#c8c8c8" opacity="0.55"/><rect x="537" y="90" width="7" height="645" fill="#c8c8c8" opacity="0.55"/><rect x="573" y="90" width="7" height="645" fill="#c8c8c8" opacity="0.55"/><rect x="609" y="90" width="7" height="645" fill="#c8c8c8" opacity="0.55"/><rect x="645" y="90" width="7" height="645" fill="#c8c8c8" opacity="0.55"/><rect x="681" y="90" width="7" height="645" fill="#c8c8c8" opacity="0.55"/><rect x="717" y="90" width="7" height="645" fill="#c8c8c8" opacity="0.55"/><rect x="753" y="90" width="7" height="645" fill="#c8c8c8" opacity="0.55"/><rect x="789" y="90" width="7" height="645" fill="#c8c8c8" opacity="0.55"/><rect x="825" y="90" width="7" height="645" fill="#c8c8c8" opacity="0.55"/><rect x="861" y="90" width="7" height="645" fill="#c8c8c8" opacity="0.55"/><rect x="897" y="90" width="7" height="645" fill="#c8c8c8" opacity="0.55"/><rect x="933" y="90" width="7" height="645" fill="#c8c8c8" opacity="0.55"/><rect x="969" y="90" width="7" height="645" fill="#c8c8c8" opacity="0.55"/><rect x="1005" y="90" width="7" height="645" fill="#c8c8c8" opacity="0.55"/><rect x="1041" y="90" width="7" height="645" fill="#c8c8c8" opacity="0.55"/><rect x="1077" y="90" width="7" height="645" fill="#c8c8c8" opacity="0.55"/><rect x="1113" y="90" width="7" height="645" fill="#c8c8c8" opacity="0.55"/><rect x="1149" y="90" width="7" height="645" fill="#c8c8c8" opacity="0.55"/><rect x="1185" y="90" width="7" height="645" fill="#c8c8c8" opacity="0.55"/><rect x="1221" y="90" width="7" height="645" fill="#c8c8c8" opacity="0.55"/><rect x="1257" y="90" width="7" height="645" fill="#c8c8c8" opacity="0.55"/><rect x="265" y="325" width="995" height="8" fill="#cfcfcf" opacity="0.8"/><rect x="265" y="728" width="995" height="12" fill="#bdbdbd" opacity="0.8"/></g></g></g>
<rect x="200.0" y="208.0" width="1460.0" height="997.0" fill="#ffffff" opacity="0.86"/>
<text x="506.0" y="508.0" font-size="66.0" fill="#404040" text-anchor="middle" textLength="186.0" lengthAdjust="spacing">3849</text>
<text x="506.0" y="611.0" font-size="37.0" fill="#333333" font-weight="bold" text-anchor="middle" textLength="160.0" lengthAdjust="spacingAndGlyphs">Your Title</text>
<text x="506.0" y="703.5" font-size="21.0" fill="#595959" text-anchor="middle" textLength="225.1" lengthAdjust="spacingAndGlyphs">Far far away, behind the</text>
<text x="506.0" y="744.2" font-size="21.0" fill="#595959" text-anchor="middle" textLength="232.4" lengthAdjust="spacingAndGlyphs">word mountains, far from</text>
<text x="506.0" y="784.9" font-size="21.0" fill="#595959" text-anchor="middle" textLength="234.8" lengthAdjust="spacingAndGlyphs">the countries Vokalia and</text>
<text x="506.0" y="825.6" font-size="21.0" fill="#595959" text-anchor="middle" textLength="250.0" lengthAdjust="spacingAndGlyphs">Consonantia, there live the</text>
<text x="506.0" y="866.3" font-size="21.0" fill="#595959" text-anchor="middle" textLength="100.5" lengthAdjust="spacingAndGlyphs">blind texts.</text>
<rect x="482.0" y="978.5" width="48.0" height="4.0" fill="#404040" />
<text x="864.0" y="508.0" font-size="66.0" fill="#404040" text-anchor="middle" textLength="186.0" lengthAdjust="spacing">3849</text>
<text x="864.0" y="611.0" font-size="37.0" fill="#333333" font-weight="bold" text-anchor="middle" textLength="160.0" lengthAdjust="spacingAndGlyphs">Your Title</text>
<text x="864.0" y="703.5" font-size="21.0" fill="#595959" text-anchor="middle" textLength="225.1" lengthAdjust="spacingAndGlyphs">Far far away, behind the</text>
<text x="864.0" y="744.2" font-size="21.0" fill="#595959" text-anchor="middle" textLength="232.4" lengthAdjust="spacingAndGlyphs">word mountains, far from</text>
<text x="864.0" y="784.9" font-size="21.0" fill="#595959" text-anchor="middle" textLength="234.8" lengthAdjust="spacingAndGlyphs">the countries Vokalia and</text>
<text x="864.0" y="825.6" font-size="21.0" fill="#595959" text-anchor="middle" textLength="250.0" lengthAdjust="spacingAndGlyphs">Consonantia, there live the</text>
<text x="864.0" y="866.3" font-size="21.0" fill="#595959" text-anchor="middle" textLength="100.5" lengthAdjust="spacingAndGlyphs">blind texts.</text>
<rect x="840.0" y="978.5" width="48.0" height="4.0" fill="#404040" />
<text x="1216.0" y="508.0" font-size="66.0" fill="#404040" text-anchor="middle" textLength="186.0" lengthAdjust="spacing">3849</text>
<text x="1216.0" y="611.0" font-size="37.0" fill="#333333" font-weight="bold" text-anchor="middle" textLength="160.0" lengthAdjust="spacingAndGlyphs">Your Title</text>
<text x="1216.0" y="703.5" font-size="21.0" fill="#595959" text-anchor="middle" textLength="225.1" lengthAdjust="spacingAndGlyphs">Far far away, behind the</text>
<text x="1216.0" y="744.2" font-size="21.0" fill="#595959" text-anchor="middle" textLength="232.4" lengthAdjust="spacingAndGlyphs">word mountains, far from</text>
<text x="1216.0" y="784.9" font-size="21.0" fill="#595959" text-anchor="middle" textLength="234.8" lengthAdjust="spacingAndGlyphs">the countries Vokalia and</text>
<text x="1216.0" y="825.6" font-size="21.0" fill="#595959" text-anchor="middle" textLength="250.0" lengthAdjust="spacingAndGlyphs">Consonantia, there live the</text>
<text x="1216.0" y="866.3" font-size="21.0" fill="#595959" text-anchor="middle" textLength="100.5" lengthAdjust="spacingAndGlyphs">blind texts.</text>
<rect x="1192.0" y="978.5" width="48.0" height="4.0" fill="#404040" />
<text x="1574.0" y="316.0" font-size="19.0" fill="#404040" font-style="italic" textLength="84.0" lengthAdjust="spacingAndGlyphs">About Us</text>
<rect x="1565.0" y="332.0" width="275.0" height="2.0" fill="#ebebeb" />
<rect x="1565.0" y="331.0" width="48.0" height="4.0" fill="#f6831f" />
<rect x="1822.0" y="306.5" width="18.0" height="5.0" fill="#ef8a3c" />
<rect x="1828.5" y="300.0" width="5.0" height="18.0" fill="#ef8a3c" />
<text x="1565.0" y="500.0" font-size="88.0" fill="#333333" font-weight="bold" textLength="350.0" lengthAdjust="spacing">ABOUT</text>
<text x="1565.0" y="630.0" font-size="88.0" fill="#333333" font-weight="bold" textLength="420.0" lengthAdjust="spacing">PIC<tspan fill="#f6831f">TURE</tspan></text>
<text x="1565.0" y="760.0" font-size="88.0" fill="#333333" font-weight="bold" textLength="272.0" lengthAdjust="spacing">SLIDE</text>
<polygon points="1563.0,815.0 1604.0,815.0 1563.0,856.0" fill="#f6831f" />
<text x="1572.0" y="1001.5" font-size="21.0" fill="#4d4d4d" font-style="italic" textLength="500.0" lengthAdjust="spacingAndGlyphs">Far far away, behind the word mountains, far from the</text>
<text x="1572.0" y="1029.0" font-size="21.0" fill="#4d4d4d" font-style="italic" textLength="507.9" lengthAdjust="spacingAndGlyphs">countries Vokalia and Consonantia, there live the blind</text>
<text x="1572.0" y="1056.5" font-size="21.0" fill="#4d4d4d" font-style="italic" textLength="50.4" lengthAdjust="spacingAndGlyphs">texts.</text>
<text x="1572.0" y="1110.5" font-size="21.0" fill="#4d4d4d" font-style="italic" textLength="116.0" lengthAdjust="spacingAndGlyphs">- The Quotes</text>
</svg>
<svg style="left:1961px;top:765px" width="660" height="400" viewBox="0 0 2351 1425">
<text x="147.0" y="151.8" font-size="27.0" fill="#0d0d0d" textLength="287.0" lengthAdjust="spacingAndGlyphs">Presentation template</text>
<rect x="2144.6" y="77.8" width="117.4" height="114.0" fill="#f6831f" />
<path d="M2175.9,152.1 L2231.9,152.1 L2205.9,130.9 M2175.9,152.1 L2211.9,119.5 L2184.1,119.5 L2184.1,144.4" fill="none" stroke="#fff1dc" stroke-width="4.6" stroke-linejoin="miter"/>
<rect x="143.0" y="1130.0" width="12.0" height="115.0" fill="#e3e3e3" />
<rect x="143.0" y="1233.0" width="117.0" height="12.0" fill="#e3e3e3" />
<text x="2220.0" y="1268.5" font-size="27.0" fill="#0d0d0d" text-anchor="end" textLength="287.0" lengthAdjust="spacingAndGlyphs">Presentation template</text>
<rect x="207.0" y="193.0" width="1937.0" height="987.0" fill="#343e53" />
<clipPath id="c14"><rect x="259.0" y="259.0" width="1130.0" height="426.0"/></clipPath>
<g clip-path="url(#c14)"><g transform="translate(227.05,233.40) scale(0.51528,0.51202)"><g filter="url(#b8)"><rect x="-300" y="-300" width="2900" height="1700" fill="#e6e5e9"/><rect x="-300" y="-30" width="2900" height="14" fill="#c9c8cd" opacity="0.8"/><rect x="-300" y="50" width="2900" height="14" fill="#c9c8cd" opacity="0.8"/><rect x="-300" y="195" width="2900" height="14" fill="#c9c8cd" opacity="0.8"/><rect x="-300" y="335" width="2900" height="14" fill="#c9c8cd" opacity="0.8"/><rect x="-300" y="545" width="2900" height="14" fill="#c9c8cd" opacity="0.8"/><rect x="-300" y="800" width="2900" height="14" fill="#c9c8cd" opacity="0.8"/><rect x="-300" y="940" width="2900" height="14" fill="#c9c8cd" opacity="0.8"/><rect x="-300" y="90" width="2900" height="60" fill="#f2f1f4" opacity="0.7"/><rect x="-300" y="240" width="2900" height="60" fill="#f2f1f4" opacity="0.7"/><rect x="-300" y="400" width="2900" height="60" fill="#f2f1f4" opacity="0.7"/><rect x="-300" y="620" width="2900" height="60" fill="#f2f1f4" opacity="0.7"/><rect x="-300" y="850" width="2900" height="60" fill="#f2f1f4" opacity="0.7"/></g><g filter="url(#b9)"><polygon points="275,430 400,405 430,560 700,850 720,1100 560,1100 310,600" fill="#e2bfab"/><polygon points="2040,560 2160,585 2175,700 2010,870 1790,1100 1650,1100 1650,830 1990,780" fill="#e2bfab"/><polygon points="735,600 880,512 1060,490 1200,540 1330,490 1500,560 1625,690 1500,850 1500,1100 840,1100 820,820" fill="#8d9095"/><ellipse cx="1190" cy="470" rx="130" ry="70" fill="#dab49c"/><ellipse cx="1195" cy="170" rx="200" ry="200" fill="#a88860"/><ellipse cx="1020" cy="280" rx="55" ry="90" fill="#4f3b2e"/><ellipse cx="1380" cy="260" rx="50" ry="120" fill="#947352"/><ellipse cx="1180" cy="250" rx="128" ry="190" fill="#e6c0a8"/><polygon points="1000,300 1010,345 330,378 330,340" fill="#8a6a48"/><polygon points="1390,280 1415,325 2060,555 2080,515" fill="#8a6a48"/><ellipse cx="330" cy="400" rx="60" ry="50" fill="#e2bfab"/><ellipse cx="2080" cy="560" rx="60" ry="50" fill="#e2bfab"/></g><g filter="url(#b4)"><rect x="900" y="745" width="45" height="255" fill="#5b2133"/><rect x="1005" y="745" width="45" height="255" fill="#5b2133"/><rect x="900" y="960" width="150" height="40" fill="#5b2133"/><rect x="1110" y="760" width="140" height="40" fill="#5b2133"/><rect x="1110" y="760" width="40" height="120" fill="#5b2133"/><rect x="1110" y="850" width="140" height="40" fill="#5b2133"/><rect x="1210" y="860" width="40" height="140" fill="#5b2133"/><rect x="1110" y="960" width="140" height="40" fill="#5b2133"/><polygon points="1330,1000 1390,780 1440,780 1500,1000 1450,1000 1415,850 1380,1000" fill="#5b2133"/><ellipse cx="1185" cy="330" rx="40" ry="18" fill="#d08a88"/></g></g></g>
<text x="332.0" y="830.5" font-size="21.0" fill="#f6f6f6" textLength="418.0" lengthAdjust="spacingAndGlyphs">Far far away, behind the word mountains, far</text>
<text x="332.0" y="857.6" font-size="21.0" fill="#f6f6f6" textLength="414.9" lengthAdjust="spacingAndGlyphs">from the countries Vokalia and Consonantia,</text>
<text x="332.0" y="884.7" font-size="21.0" fill="#f6f6f6" textLength="437.2" lengthAdjust="spacingAndGlyphs">there live the blind texts. Separated they live in</text>
<text x="332.0" y="911.8" font-size="21.0" fill="#f6f6f6" textLength="379.6" lengthAdjust="spacingAndGlyphs">Bookmarksgrove right at the coast of the</text>
<text x="332.0" y="938.9" font-size="21.0" fill="#f6f6f6" textLength="457.2" lengthAdjust="spacingAndGlyphs">Semantics, a large language ocean. A small river</text>
<text x="332.0" y="966.0" font-size="21.0" fill="#f6f6f6" textLength="443.1" lengthAdjust="spacingAndGlyphs">named Duden flows by their place and supplies</text>
<text x="332.0" y="993.1" font-size="21.0" fill="#f6f6f6" textLength="344.3" lengthAdjust="spacingAndGlyphs">it with the necessary regelialia. It is a</text>
<text x="332.0" y="1020.2" font-size="21.0" fill="#f6f6f6" textLength="422.7" lengthAdjust="spacingAndGlyphs">paradisematic country, in which roasted parts</text>
<text x="332.0" y="1047.3" font-size="21.0" fill="#f6f6f6" textLength="304.4" lengthAdjust="spacingAndGlyphs">of sentences fly into your mouth.</text>
<text x="857.0" y="830.5" font-size="21.0" fill="#f6f6f6" textLength="418.0" lengthAdjust="spacingAndGlyphs">Even the all-powerful Pointing has no control</text>
<text x="857.0" y="857.6" font-size="21.0" fill="#f6f6f6" textLength="324.0" lengthAdjust="spacingAndGlyphs">about the blind texts it is an almost</text>
<text x="857.0" y="884.7" font-size="21.0" fill="#f6f6f6" textLength="418.0" lengthAdjust="spacingAndGlyphs">unorthographic life One day however a small</text>
<text x="857.0" y="911.8" font-size="21.0" fill="#f6f6f6" textLength="421.5" lengthAdjust="spacingAndGlyphs">line of blind text by the name of Lorem Ipsum</text>
<text x="857.0" y="938.9" font-size="21.0" fill="#f6f6f6" textLength="434.0" lengthAdjust="spacingAndGlyphs">decided to leave for the far World of Grammar.</text>
<text x="857.0" y="966.0" font-size="21.0" fill="#f6f6f6" textLength="382.7" lengthAdjust="spacingAndGlyphs">The Big Oxmox advised her not to do so,</text>
<text x="857.0" y="993.1" font-size="21.0" fill="#f6f6f6" textLength="449.7" lengthAdjust="spacingAndGlyphs">because there were thousands of bad Commas,</text>
<text x="857.0" y="1020.2" font-size="21.0" fill="#f6f6f6" textLength="436.7" lengthAdjust="spacingAndGlyphs">wild Question Marks and devious Semikoli, but</text>
<text x="857.0" y="1047.3" font-size="21.0" fill="#f6f6f6" textLength="294.3" lengthAdjust="spacingAndGlyphs">the Little Blind Text didn’t listen.</text>
<text x="1574.0" y="333.0" font-size="19.0" fill="#ffffff" font-style="italic" textLength="84.0" lengthAdjust="spacingAndGlyphs">About Us</text>
<rect x="1565.0" y="349.0" width="275.0" height="2.0" fill="#6a7284" />
<rect x="1565.0" y="348.0" width="48.0" height="4.0" fill="#f6831f" />
<rect x="1822.0" y="323.5" width="18.0" height="5.0" fill="#ef8a3c" />
<rect x="1828.5" y="317.0" width="5.0" height="18.0" fill="#ef8a3c" />
<text x="1565.0" y="492.0" font-size="64.0" fill="#ffffff" font-weight="bold" textLength="128.0" lengthAdjust="spacingAndGlyphs">ONE</text>
<text x="1565.0" y="579.0" font-size="64.0" fill="#ffffff" font-weight="bold" textLength="252.0" lengthAdjust="spacingAndGlyphs">PICTURE</text>
<text x="1565.0" y="666.0" font-size="64.0" fill="#ffffff" font-weight="bold" textLength="159.8" lengthAdjust="spacingAndGlyphs">SLIDE</text>
<text x="1744.7" y="666.0" font-size="64.0" fill="#f6831f" font-weight="bold" textLength="163.3" lengthAdjust="spacingAndGlyphs">WITH</text>
<text x="1565.0" y="753.0" font-size="64.0" fill="#ffffff" font-weight="bold" textLength="144.0" lengthAdjust="spacingAndGlyphs">TEXT</text>
<polygon points="1565.0,793.0 1607.0,793.0 1565.0,835.0" fill="#f6831f" />
<text x="1565.0" y="973.6" font-size="21.5" fill="#f4f4f4" textLength="281.7" lengthAdjust="spacingAndGlyphs">Far far away, behind the word</text>
<text x="1565.0" y="1000.8" font-size="21.5" fill="#f4f4f4" textLength="313.0" lengthAdjust="spacingAndGlyphs">mountains, far from the countries</text>
<text x="1565.0" y="1028.0" font-size="21.5" fill="#f4f4f4" textLength="335.7" lengthAdjust="spacingAndGlyphs">Vokalia and Consonantia, there live</text>
<text x="1565.0" y="1055.2" font-size="21.5" fill="#f4f4f4" textLength="138.1" lengthAdjust="spacingAndGlyphs">the blind texts.</text>
</svg>
<svg style="left:0px;top:1148px" width="660" height="400" viewBox="0 0 2351 1425">
<text x="147.0" y="148.0" font-size="27.0" fill="#0d0d0d" textLength="287.0" lengthAdjust="spacingAndGlyphs">Presentation template</text>
<rect x="2144.6" y="74.0" width="117.4" height="114.0" fill="#f6831f" />
<path d="M2175.9,148.3 L2231.9,148.3 L2205.9,127.1 M2175.9,148.3 L2211.9,115.7 L2184.1,115.7 L2184.1,140.6" fill="none" stroke="#fff1dc" stroke-width="4.6" stroke-linejoin="miter"/>
<rect x="143.0" y="1130.0" width="12.0" height="115.0" fill="#e3e3e3" />
<rect x="143.0" y="1233.0" width="117.0" height="12.0" fill="#e3e3e3" />
<text x="2220.0" y="1268.5" font-size="27.0" fill="#0d0d0d" text-anchor="end" textLength="287.0" lengthAdjust="spacingAndGlyphs">Presentation template</text>
<text x="851.0" y="338.0" font-size="53.0" fill="#333333" text-anchor="middle" textLength="248.0" lengthAdjust="spacingAndGlyphs">YOUR TITLE</text>
<rect x="1014.0" y="270.0" width="50.0" height="6.0" fill="#f6831f" />
<rect x="1036.0" y="248.0" width="6.0" height="50.0" fill="#f6831f" />
<text x="841.0" y="437.7" font-size="22.0" fill="#404040" text-anchor="middle" textLength="973.0" lengthAdjust="spacingAndGlyphs">Far far away, behind the word mountains, far from the countries Vokalia and Consonantia, there</text>
<text x="841.0" y="467.7" font-size="22.0" fill="#404040" text-anchor="middle" textLength="977.2" lengthAdjust="spacingAndGlyphs">live the blind texts. Separated they live in Bookmarksgrove right at the coast of the Semantics, a</text>
<text x="841.0" y="496.7" font-size="22.0" fill="#404040" text-anchor="middle" textLength="228.0" lengthAdjust="spacingAndGlyphs">large language ocean.</text>
<text x="841.0" y="556.7" font-size="22.0" fill="#404040" text-anchor="middle" textLength="996.4" lengthAdjust="spacingAndGlyphs">A small river named Duden flows by their place and supplies it with the necessary regelialia. It is a</text>
<text x="841.0" y="586.7" font-size="22.0" fill="#404040" text-anchor="middle" textLength="230.1" lengthAdjust="spacingAndGlyphs">paradisematic country.</text>
<clipPath id="c15"><rect x="277.0" y="684.0" width="1130.0" height="426.0"/></clipPath>
<g clip-path="url(#c15)"><g transform="translate(354.02,494.10) scale(0.50673,0.50775)"><g filter="url(#b12)"><rect x="-200" y="-200" width="2300" height="2000" fill="#14204a"/><rect x="-100" y="-100" width="225" height="1800" fill="#223264"/><ellipse cx="80" cy="120" rx="50" ry="45" fill="#c8d4f0"/><ellipse cx="95" cy="265" rx="30" ry="22" fill="#a9bbe6"/><ellipse cx="70" cy="600" rx="40" ry="150" fill="#6675a3"/><rect x="120" y="-100" width="180" height="980" fill="#2f2a44"/><rect x="130" y="500" width="170" height="380" fill="#43384f"/><rect x="300" y="-100" width="105" height="1800" fill="#081026"/><rect x="405" y="-100" width="65" height="1800" fill="#101c44"/><rect x="405" y="-100" width="860" height="270" fill="#1b4382"/><polygon points="405,165 1035,55 1040,330 405,395" fill="#bcc5e6"/><polygon points="1040,55 1250,50 1250,300 1040,330" fill="#4a628f"/><polygon points="405,395 1250,290 1250,520 470,650 405,650" fill="#2e4178"/><polygon points="475,480 1150,420 1250,520 475,640" fill="#808bb5"/><rect x="405" y="640" width="295" height="360" fill="#1a2c5c"/><rect x="1265" y="-100" width="460" height="820" fill="#413452"/><rect x="1725" y="-100" width="375" height="1800" fill="#101833"/><ellipse cx="1800" cy="800" rx="70" ry="110" fill="#2b4c84"/><rect x="1265" y="720" width="460" height="330" fill="#6a7098"/><rect x="-100" y="880" width="400" height="820" fill="#2c3a6c"/><ellipse cx="210" cy="1060" rx="80" ry="150" fill="#9c8698"/><ellipse cx="80" cy="1150" rx="35" ry="200" fill="#8f9ccb"/><ellipse cx="200" cy="1400" rx="90" ry="110" fill="#2a3260"/><ellipse cx="440" cy="1080" rx="70" ry="105" fill="#eceaff"/><rect x="470" y="1180" width="140" height="300" fill="#2850ac"/><rect x="1420" y="1050" width="305" height="650" fill="#27468f"/><ellipse cx="1540" cy="1140" rx="110" ry="65" fill="#c5cdea"/><ellipse cx="1600" cy="1400" rx="90" ry="70" fill="#7f92d0"/><rect x="-400" y="300" width="440" height="1000" fill="#1b2b5e"/><rect x="-400" y="300" width="250" height="320" fill="#1d4468"/><ellipse cx="-40" cy="740" rx="55" ry="75" fill="#eef0ff"/><ellipse cx="-60" cy="760" rx="130" ry="120" fill="#5a6ea8" opacity="0.6"/><rect x="-400" y="900" width="440" height="400" fill="#8a95c0"/><rect x="-150" y="950" width="190" height="350" fill="#a9a0c0"/><rect x="1950" y="300" width="350" height="1000" fill="#34468a"/><ellipse cx="2040" cy="880" rx="120" ry="110" fill="#9fb0e0"/><ellipse cx="2060" cy="1080" rx="110" ry="80" fill="#d0d8f4"/><ellipse cx="2000" cy="600" rx="80" ry="200" fill="#1a2450"/></g><g filter="url(#b10)"><polygon points="430,960 500,780 640,690 730,760 770,900 900,970 1110,970 1230,650 1400,610 1660,770 1700,890 1560,1050 1420,1600 580,1600 600,1100" fill="#485a90"/><ellipse cx="560" cy="860" rx="80" ry="110" fill="#7686ba"/><ellipse cx="1500" cy="760" rx="150" ry="90" fill="#7d8fc2"/><ellipse cx="1330" cy="1250" rx="80" ry="250" fill="#4d6198"/><ellipse cx="690" cy="1300" rx="70" ry="220" fill="#3c4f86"/><ellipse cx="1600" cy="900" rx="60" ry="100" fill="#8496c8"/><polygon points="800,900 1050,900 1120,1600 750,1600" fill="#0b0d18"/><ellipse cx="930" cy="560" rx="225" ry="235" fill="#1f161c"/><polygon points="710,600 640,900 760,970 860,920 1000,920 1120,970 1240,900 1180,600" fill="#241920"/><ellipse cx="920" cy="720" rx="100" ry="135" fill="#b8959a"/><ellipse cx="930" cy="640" rx="80" ry="40" fill="#8d6f78"/><ellipse cx="1180" cy="545" rx="75" ry="60" fill="#b9979a"/><ellipse cx="715" cy="600" rx="35" ry="65" fill="#9c7f88"/></g><g filter="url(#b3)"><ellipse cx="1603" cy="277" rx="8" ry="8" fill="#e8f0ff" opacity="0.9"/><ellipse cx="1829" cy="164" rx="8" ry="8" fill="#e8f0ff" opacity="0.9"/><ellipse cx="1750" cy="587" rx="8" ry="8" fill="#e8f0ff" opacity="0.9"/><ellipse cx="1420" cy="791" rx="8" ry="8" fill="#e8f0ff" opacity="0.9"/><ellipse cx="1406" cy="684" rx="8" ry="8" fill="#e8f0ff" opacity="0.9"/><ellipse cx="1673" cy="1251" rx="8" ry="8" fill="#e8f0ff" opacity="0.9"/><ellipse cx="1465" cy="381" rx="8" ry="8" fill="#e8f0ff" opacity="0.9"/><ellipse cx="1813" cy="1425" rx="8" ry="8" fill="#e8f0ff" opacity="0.9"/><ellipse cx="1778" cy="631" rx="8" ry="8" fill="#e8f0ff" opacity="0.9"/><ellipse cx="2054" cy="127" rx="8" ry="8" fill="#e8f0ff" opacity="0.9"/><ellipse cx="1972" cy="477" rx="8" ry="8" fill="#e8f0ff" opacity="0.9"/><ellipse cx="1593" cy="1235" rx="8" ry="8" fill="#e8f0ff" opacity="0.9"/><ellipse cx="1505" cy="898" rx="8" ry="8" fill="#e8f0ff" opacity="0.9"/><ellipse cx="1821" cy="596" rx="8" ry="8" fill="#e8f0ff" opacity="0.9"/><ellipse cx="1758" cy="150" rx="8" ry="8" fill="#e8f0ff" opacity="0.9"/><ellipse cx="1421" cy="357" rx="8" ry="8" fill="#e8f0ff" opacity="0.9"/><ellipse cx="1849" cy="676" rx="8" ry="8" fill="#e8f0ff" opacity="0.9"/><ellipse cx="1597" cy="903" rx="8" ry="8" fill="#e8f0ff" opacity="0.9"/><ellipse cx="1693" cy="492" rx="8" ry="8" fill="#e8f0ff" opacity="0.9"/><ellipse cx="1928" cy="1067" rx="8" ry="8" fill="#e8f0ff" opacity="0.9"/><ellipse cx="1548" cy="887" rx="8" ry="8" fill="#e8f0ff" opacity="0.9"/><ellipse cx="1742" cy="1320" rx="8" ry="8" fill="#e8f0ff" opacity="0.9"/><ellipse cx="1883" cy="475" rx="8" ry="8" fill="#e8f0ff" opacity="0.9"/><ellipse cx="2056" cy="230" rx="8" ry="8" fill="#e8f0ff" opacity="0.9"/><ellipse cx="1669" cy="1150" rx="8" ry="8" fill="#e8f0ff" opacity="0.9"/><ellipse cx="1485" cy="764" rx="8" ry="8" fill="#e8f0ff" opacity="0.9"/><ellipse cx="1407" cy="1022" rx="8" ry="8" fill="#e8f0ff" opacity="0.9"/><ellipse cx="1908" cy="885" rx="8" ry="8" fill="#e8f0ff" opacity="0.9"/><ellipse cx="1984" cy="512" rx="8" ry="8" fill="#e8f0ff" opacity="0.9"/><ellipse cx="1860" cy="916" rx="8" ry="8" fill="#e8f0ff" opacity="0.9"/><ellipse cx="1780" cy="717" rx="8" ry="8" fill="#e8f0ff" opacity="0.9"/><ellipse cx="1960" cy="1420" rx="8" ry="8" fill="#e8f0ff" opacity="0.9"/><ellipse cx="1707" cy="1016" rx="8" ry="8" fill="#e8f0ff" opacity="0.9"/><ellipse cx="1422" cy="1070" rx="8" ry="8" fill="#e8f0ff" opacity="0.9"/><ellipse cx="1827" cy="1490" rx="8" ry="8" fill="#e8f0ff" opacity="0.9"/><ellipse cx="1947" cy="470" rx="8" ry="8" fill="#e8f0ff" opacity="0.9"/><ellipse cx="1646" cy="1023" rx="8" ry="8" fill="#e8f0ff" opacity="0.9"/><ellipse cx="1396" cy="725" rx="8" ry="8" fill="#e8f0ff" opacity="0.9"/><ellipse cx="1421" cy="1166" rx="8" ry="8" fill="#e8f0ff" opacity="0.9"/><ellipse cx="1469" cy="417" rx="8" ry="8" fill="#e8f0ff" opacity="0.9"/><ellipse cx="1650" cy="1315" rx="8" ry="8" fill="#e8f0ff" opacity="0.9"/><ellipse cx="1436" cy="707" rx="8" ry="8" fill="#e8f0ff" opacity="0.9"/><ellipse cx="1759" cy="1332" rx="8" ry="8" fill="#e8f0ff" opacity="0.9"/><ellipse cx="1945" cy="1304" rx="8" ry="8" fill="#e8f0ff" opacity="0.9"/><ellipse cx="1572" cy="658" rx="8" ry="8" fill="#e8f0ff" opacity="0.9"/><ellipse cx="1628" cy="1333" rx="8" ry="8" fill="#e8f0ff" opacity="0.9"/><ellipse cx="2041" cy="277" rx="8" ry="8" fill="#e8f0ff" opacity="0.9"/><ellipse cx="1502" cy="394" rx="8" ry="8" fill="#e8f0ff" opacity="0.9"/><ellipse cx="1541" cy="758" rx="8" ry="8" fill="#e8f0ff" opacity="0.9"/><ellipse cx="1786" cy="438" rx="8" ry="8" fill="#e8f0ff" opacity="0.9"/><ellipse cx="1383" cy="663" rx="8" ry="8" fill="#e8f0ff" opacity="0.9"/><ellipse cx="1635" cy="876" rx="8" ry="8" fill="#e8f0ff" opacity="0.9"/><ellipse cx="2038" cy="1054" rx="8" ry="8" fill="#e8f0ff" opacity="0.9"/><ellipse cx="1736" cy="949" rx="8" ry="8" fill="#e8f0ff" opacity="0.9"/><ellipse cx="1847" cy="138" rx="8" ry="8" fill="#e8f0ff" opacity="0.9"/><ellipse cx="2001" cy="1183" rx="8" ry="8" fill="#e8f0ff" opacity="0.9"/><ellipse cx="1983" cy="1209" rx="8" ry="8" fill="#e8f0ff" opacity="0.9"/><ellipse cx="1651" cy="635" rx="8" ry="8" fill="#e8f0ff" opacity="0.9"/><ellipse cx="1451" cy="973" rx="8" ry="8" fill="#e8f0ff" opacity="0.9"/><ellipse cx="1524" cy="294" rx="8" ry="8" fill="#e8f0ff" opacity="0.9"/><ellipse cx="1615" cy="136" rx="8" ry="8" fill="#e8f0ff" opacity="0.9"/><ellipse cx="1450" cy="584" rx="8" ry="8" fill="#e8f0ff" opacity="0.9"/><ellipse cx="1398" cy="1319" rx="8" ry="8" fill="#e8f0ff" opacity="0.9"/><ellipse cx="1804" cy="274" rx="8" ry="8" fill="#e8f0ff" opacity="0.9"/><ellipse cx="1554" cy="560" rx="8" ry="8" fill="#e8f0ff" opacity="0.9"/><ellipse cx="1631" cy="237" rx="8" ry="8" fill="#e8f0ff" opacity="0.9"/><ellipse cx="1966" cy="1490" rx="8" ry="8" fill="#e8f0ff" opacity="0.9"/><ellipse cx="1702" cy="757" rx="8" ry="8" fill="#e8f0ff" opacity="0.9"/><ellipse cx="1616" cy="441" rx="8" ry="8" fill="#e8f0ff" opacity="0.9"/><ellipse cx="1952" cy="292" rx="8" ry="8" fill="#e8f0ff" opacity="0.9"/><ellipse cx="1396" cy="1429" rx="8" ry="8" fill="#e8f0ff" opacity="0.9"/><ellipse cx="1744" cy="271" rx="8" ry="8" fill="#e8f0ff" opacity="0.9"/><ellipse cx="1755" cy="99" rx="8" ry="8" fill="#e8f0ff" opacity="0.9"/><ellipse cx="1744" cy="1469" rx="8" ry="8" fill="#e8f0ff" opacity="0.9"/><ellipse cx="1976" cy="1063" rx="8" ry="8" fill="#e8f0ff" opacity="0.9"/><ellipse cx="1560" cy="588" rx="8" ry="8" fill="#e8f0ff" opacity="0.9"/><ellipse cx="1495" cy="1172" rx="8" ry="8" fill="#e8f0ff" opacity="0.9"/><ellipse cx="1747" cy="1182" rx="8" ry="8" fill="#e8f0ff" opacity="0.9"/><ellipse cx="1607" cy="381" rx="8" ry="8" fill="#e8f0ff" opacity="0.9"/><ellipse cx="1940" cy="1478" rx="8" ry="8" fill="#e8f0ff" opacity="0.9"/><ellipse cx="1968" cy="1221" rx="8" ry="8" fill="#e8f0ff" opacity="0.9"/><ellipse cx="1945" cy="1125" rx="8" ry="8" fill="#e8f0ff" opacity="0.9"/><ellipse cx="1536" cy="805" rx="8" ry="8" fill="#e8f0ff" opacity="0.9"/><ellipse cx="1625" cy="102" rx="8" ry="8" fill="#e8f0ff" opacity="0.9"/><ellipse cx="1399" cy="462" rx="8" ry="8" fill="#e8f0ff" opacity="0.9"/><ellipse cx="1559" cy="1057" rx="8" ry="8" fill="#e8f0ff" opacity="0.9"/><ellipse cx="2040" cy="704" rx="8" ry="8" fill="#e8f0ff" opacity="0.9"/><ellipse cx="2027" cy="1483" rx="8" ry="8" fill="#e8f0ff" opacity="0.9"/><ellipse cx="2039" cy="585" rx="8" ry="8" fill="#e8f0ff" opacity="0.9"/><ellipse cx="1532" cy="387" rx="8" ry="8" fill="#e8f0ff" opacity="0.9"/><ellipse cx="1516" cy="354" rx="8" ry="8" fill="#e8f0ff" opacity="0.9"/><ellipse cx="1811" cy="1356" rx="8" ry="8" fill="#e8f0ff" opacity="0.9"/><ellipse cx="1960" cy="750" rx="8" ry="8" fill="#e8f0ff" opacity="0.9"/><ellipse cx="1831" cy="1211" rx="8" ry="8" fill="#e8f0ff" opacity="0.9"/><ellipse cx="1438" cy="1011" rx="8" ry="8" fill="#e8f0ff" opacity="0.9"/><ellipse cx="2008" cy="1187" rx="8" ry="8" fill="#e8f0ff" opacity="0.9"/><ellipse cx="1898" cy="748" rx="8" ry="8" fill="#e8f0ff" opacity="0.9"/><ellipse cx="1503" cy="1196" rx="8" ry="8" fill="#e8f0ff" opacity="0.9"/><ellipse cx="1609" cy="1213" rx="8" ry="8" fill="#e8f0ff" opacity="0.9"/><ellipse cx="2050" cy="630" rx="8" ry="8" fill="#e8f0ff" opacity="0.9"/><ellipse cx="1657" cy="1423" rx="8" ry="8" fill="#e8f0ff" opacity="0.9"/><ellipse cx="1880" cy="305" rx="8" ry="8" fill="#e8f0ff" opacity="0.9"/><ellipse cx="2004" cy="1221" rx="8" ry="8" fill="#e8f0ff" opacity="0.9"/><ellipse cx="1481" cy="1250" rx="8" ry="8" fill="#e8f0ff" opacity="0.9"/><ellipse cx="2056" cy="1006" rx="8" ry="8" fill="#e8f0ff" opacity="0.9"/><ellipse cx="1622" cy="850" rx="8" ry="8" fill="#e8f0ff" opacity="0.9"/><ellipse cx="2050" cy="996" rx="8" ry="8" fill="#e8f0ff" opacity="0.9"/><ellipse cx="1743" cy="1404" rx="8" ry="8" fill="#e8f0ff" opacity="0.9"/><ellipse cx="1679" cy="1315" rx="8" ry="8" fill="#e8f0ff" opacity="0.9"/><ellipse cx="1950" cy="364" rx="8" ry="8" fill="#e8f0ff" opacity="0.9"/><ellipse cx="1554" cy="482" rx="8" ry="8" fill="#e8f0ff" opacity="0.9"/><ellipse cx="1546" cy="904" rx="8" ry="8" fill="#e8f0ff" opacity="0.9"/><ellipse cx="1559" cy="663" rx="8" ry="8" fill="#e8f0ff" opacity="0.9"/><ellipse cx="1470" cy="1370" rx="8" ry="8" fill="#e8f0ff" opacity="0.9"/><ellipse cx="1624" cy="720" rx="8" ry="8" fill="#e8f0ff" opacity="0.9"/><ellipse cx="1783" cy="1362" rx="8" ry="8" fill="#e8f0ff" opacity="0.9"/><ellipse cx="1670" cy="1382" rx="8" ry="8" fill="#e8f0ff" opacity="0.9"/><ellipse cx="1726" cy="826" rx="8" ry="8" fill="#e8f0ff" opacity="0.9"/><ellipse cx="1741" cy="87" rx="8" ry="8" fill="#e8f0ff" opacity="0.9"/><ellipse cx="1684" cy="324" rx="8" ry="8" fill="#e8f0ff" opacity="0.9"/><ellipse cx="1383" cy="1211" rx="8" ry="8" fill="#e8f0ff" opacity="0.9"/><ellipse cx="1499" cy="742" rx="8" ry="8" fill="#e8f0ff" opacity="0.9"/><ellipse cx="660" cy="545" rx="9" ry="9" fill="#e8f0ff" opacity="0.9"/><ellipse cx="680" cy="535" rx="9" ry="9" fill="#e8f0ff" opacity="0.9"/><ellipse cx="520" cy="1465" rx="9" ry="9" fill="#e8f0ff" opacity="0.9"/><ellipse cx="400" cy="1510" rx="9" ry="9" fill="#e8f0ff" opacity="0.9"/><ellipse cx="1290" cy="540" rx="9" ry="9" fill="#e8f0ff" opacity="0.9"/><ellipse cx="1360" cy="565" rx="9" ry="9" fill="#e8f0ff" opacity="0.9"/><ellipse cx="730" cy="830" rx="9" ry="9" fill="#e8f0ff" opacity="0.9"/></g></g></g>
<text x="1577.0" y="330.0" font-size="19.0" fill="#404040" font-style="italic" textLength="84.0" lengthAdjust="spacingAndGlyphs">About Us</text>
<rect x="1568.0" y="346.0" width="275.0" height="2.0" fill="#ebebeb" />
<rect x="1568.0" y="345.0" width="48.0" height="4.0" fill="#f6831f" />
<rect x="1825.0" y="320.5" width="18.0" height="5.0" fill="#ef8a3c" />
<rect x="1831.5" y="314.0" width="5.0" height="18.0" fill="#ef8a3c" />
<text x="1568.0" y="492.0" font-size="64.0" fill="#262626" font-weight="bold" textLength="128.0" lengthAdjust="spacingAndGlyphs">ONE</text>
<text x="1568.0" y="578.0" font-size="64.0" fill="#262626" font-weight="bold" textLength="252.0" lengthAdjust="spacingAndGlyphs">PICTURE</text>
<text x="1568.0" y="665.0" font-size="64.0" fill="#262626" font-weight="bold" textLength="159.8" lengthAdjust="spacingAndGlyphs">SLIDE</text>
<text x="1747.7" y="665.0" font-size="64.0" fill="#f6831f" font-weight="bold" textLength="163.3" lengthAdjust="spacingAndGlyphs">WITH</text>
<text x="1568.0" y="752.0" font-size="64.0" fill="#262626" font-weight="bold" textLength="144.0" lengthAdjust="spacingAndGlyphs">TEXT</text>
<polygon points="1567.0,792.0 1607.0,792.0 1567.0,832.0" fill="#f6831f" />
<text x="1567.0" y="972.6" font-size="21.5" fill="#6a6a6a" textLength="281.7" lengthAdjust="spacingAndGlyphs">Far far away, behind the word</text>
<text x="1567.0" y="999.8" font-size="21.5" fill="#6a6a6a" textLength="313.0" lengthAdjust="spacingAndGlyphs">mountains, far from the countries</text>
<text x="1567.0" y="1027.0" font-size="21.5" fill="#6a6a6a" textLength="335.7" lengthAdjust="spacingAndGlyphs">Vokalia and Consonantia, there live</text>
<text x="1567.0" y="1054.2" font-size="21.5" fill="#6a6a6a" textLength="138.1" lengthAdjust="spacingAndGlyphs">the blind texts.</text>
</svg>
<svg style="left:653px;top:1148px" width="660" height="400" viewBox="0 0 2351 1425">
<text x="151.0" y="148.0" font-size="27.0" fill="#0d0d0d" textLength="287.0" lengthAdjust="spacingAndGlyphs">Presentation template</text>
<polygon points="2152.0,74.0 2266.0,74.0 2266.0,188.0" fill="#f6831f" />
<rect x="147.0" y="1130.0" width="12.0" height="115.0" fill="#e3e3e3" />
<rect x="147.0" y="1233.0" width="117.0" height="12.0" fill="#e3e3e3" />
<text x="2224.0" y="1268.5" font-size="27.0" fill="#0d0d0d" text-anchor="end" textLength="287.0" lengthAdjust="spacingAndGlyphs">Presentation template</text>
<text x="351.0" y="330.0" font-size="19.0" fill="#404040" font-style="italic" textLength="84.0" lengthAdjust="spacingAndGlyphs">About Us</text>
<rect x="342.0" y="346.0" width="275.0" height="2.0" fill="#ebebeb" />
<rect x="342.0" y="345.0" width="48.0" height="4.0" fill="#f6831f" />
<rect x="599.0" y="320.5" width="18.0" height="5.0" fill="#ef8a3c" />
<rect x="605.5" y="314.0" width="5.0" height="18.0" fill="#ef8a3c" />
<text x="342.0" y="648.0" font-size="64.0" fill="#262626" font-weight="bold" textLength="134.0" lengthAdjust="spacingAndGlyphs">OUR</text>
<text x="342.0" y="735.0" font-size="64.0" fill="#262626" font-weight="bold" textLength="334.0" lengthAdjust="spacingAndGlyphs">BEST TEAM</text>
<polygon points="341.0,792.0 382.0,792.0 341.0,833.0" fill="#f6831f" />
<clipPath id="c16"><circle cx="1064" cy="432" r="95"/></clipPath>
<g clip-path="url(#c16)"><g transform="translate(915.46,292.09) scale(0.30303,0.30303)"><g filter="url(#b14)"><rect x="100" y="100" width="800" height="800" fill="#6f7f80"/><ellipse cx="330" cy="520" rx="200" ry="330" fill="#2a1c16"/><ellipse cx="420" cy="250" rx="200" ry="110" fill="#2e1f18"/><ellipse cx="420" cy="760" rx="150" ry="120" fill="#3a261e"/><polygon points="400,280 560,250 700,330 690,400 780,480 600,600 700,800 520,800 450,600 400,450" fill="#d3aa92"/><ellipse cx="400" cy="560" rx="60" ry="70" fill="#c89a84"/></g></g></g>
<clipPath id="c17"><circle cx="1471.5" cy="432" r="95"/></clipPath>
<g clip-path="url(#c17)"><g transform="translate(915.46,292.09) scale(0.30303,0.30303)"><g filter="url(#b14)"><rect x="1400" y="100" width="900" height="800" fill="#a4acb4"/><rect x="1400" y="380" width="900" height="40" fill="#2f4a50"/><ellipse cx="1835" cy="420" rx="270" ry="330" fill="#2a1c20"/><ellipse cx="1650" cy="650" rx="90" ry="200" fill="#2a1c20"/><ellipse cx="2030" cy="650" rx="90" ry="200" fill="#2a1c20"/><ellipse cx="1840" cy="470" rx="140" ry="190" fill="#c4947f"/><ellipse cx="1850" cy="720" rx="120" ry="80" fill="#b88a78"/></g></g></g>
<text x="1064.0" y="592.0" font-size="22.0" fill="#404040" font-style="italic" text-anchor="middle" textLength="120.0" lengthAdjust="spacingAndGlyphs">Art Director</text>
<text x="1064.0" y="640.0" font-size="40.0" fill="#404040" text-anchor="middle" textLength="211.0" lengthAdjust="spacingAndGlyphs">Team name</text>
<text x="1064.0" y="734.5" font-size="21.0" fill="#595959" text-anchor="middle" textLength="282.6" lengthAdjust="spacingAndGlyphs">Far far away, behind the word</text>
<text x="1064.0" y="775.3" font-size="21.0" fill="#595959" text-anchor="middle" textLength="314.0" lengthAdjust="spacingAndGlyphs">mountains, far from the countries</text>
<text x="1064.0" y="816.1" font-size="21.0" fill="#595959" text-anchor="middle" textLength="298.6" lengthAdjust="spacingAndGlyphs">Vokalia and Consonantia, there</text>
<text x="1064.0" y="856.9" font-size="21.0" fill="#595959" text-anchor="middle" textLength="281.8" lengthAdjust="spacingAndGlyphs">live the blind texts. Separated</text>
<text x="1064.0" y="897.7" font-size="21.0" fill="#595959" text-anchor="middle" textLength="316.4" lengthAdjust="spacingAndGlyphs">they live in Bookmarksgrove right</text>
<text x="1064.0" y="938.5" font-size="21.0" fill="#595959" text-anchor="middle" textLength="300.9" lengthAdjust="spacingAndGlyphs">at the coast of the Semantics, a</text>
<text x="1064.0" y="979.3" font-size="21.0" fill="#595959" text-anchor="middle" textLength="212.6" lengthAdjust="spacingAndGlyphs">large language ocean.</text>
<text x="1471.5" y="592.0" font-size="22.0" fill="#404040" font-style="italic" text-anchor="middle" textLength="120.0" lengthAdjust="spacingAndGlyphs">Art Director</text>
<text x="1471.5" y="640.0" font-size="40.0" fill="#404040" text-anchor="middle" textLength="211.0" lengthAdjust="spacingAndGlyphs">Team name</text>
<text x="1471.5" y="734.5" font-size="21.0" fill="#595959" text-anchor="middle" textLength="282.6" lengthAdjust="spacingAndGlyphs">Far far away, behind the word</text>
<text x="1471.5" y="775.3" font-size="21.0" fill="#595959" text-anchor="middle" textLength="314.0" lengthAdjust="spacingAndGlyphs">mountains, far from the countries</text>
<text x="1471.5" y="816.1" font-size="21.0" fill="#595959" text-anchor="middle" textLength="298.6" lengthAdjust="spacingAndGlyphs">Vokalia and Consonantia, there</text>
<text x="1471.5" y="856.9" font-size="21.0" fill="#595959" text-anchor="middle" textLength="281.8" lengthAdjust="spacingAndGlyphs">live the blind texts. Separated</text>
<text x="1471.5" y="897.7" font-size="21.0" fill="#595959" text-anchor="middle" textLength="316.4" lengthAdjust="spacingAndGlyphs">they live in Bookmarksgrove right</text>
<text x="1471.5" y="938.5" font-size="21.0" fill="#595959" text-anchor="middle" textLength="300.9" lengthAdjust="spacingAndGlyphs">at the coast of the Semantics, a</text>
<text x="1471.5" y="979.3" font-size="21.0" fill="#595959" text-anchor="middle" textLength="212.6" lengthAdjust="spacingAndGlyphs">large language ocean.</text>
<rect x="1743.0" y="1043.2" width="90.0" height="3.5" fill="#d9d9d9" />
<rect x="1786.2" y="1000.0" width="3.5" height="90.0" fill="#d9d9d9" />
<g transform="translate(1947,275) rotate(90)"><text x="0.0" y="0.0" font-size="39.0" fill="#262626" font-weight="bold" textLength="847.0" lengthAdjust="spacingAndGlyphs"><tspan fill="#262626">Far far </tspan><tspan fill="#f6831f">away,</tspan><tspan fill="#262626"> behind the word mountains, far from</tspan></text>
</g>
<g transform="translate(1899,435) rotate(90)"><text x="0.0" y="0.0" font-size="39.0" fill="#262626" font-weight="bold" textLength="525.0" lengthAdjust="spacingAndGlyphs"><tspan fill="#262626">Vokalia and </tspan><tspan fill="#f6831f">Consonantia, there</tspan></text>
</g>
</svg>
<svg style="left:1307px;top:1148px" width="660" height="400" viewBox="0 0 2351 1425">
<text x="147.0" y="148.0" font-size="27.0" fill="#0d0d0d" textLength="287.0" lengthAdjust="spacingAndGlyphs">Presentation template</text>
<polygon points="2148.0,74.0 2262.0,74.0 2262.0,188.0" fill="#f6831f" />
<rect x="143.0" y="1130.0" width="12.0" height="115.0" fill="#e3e3e3" />
<rect x="143.0" y="1233.0" width="117.0" height="12.0" fill="#e3e3e3" />
<text x="2220.0" y="1268.5" font-size="27.0" fill="#0d0d0d" text-anchor="end" textLength="287.0" lengthAdjust="spacingAndGlyphs">Presentation template</text>
<text x="348.0" y="330.0" font-size="19.0" fill="#404040" font-style="italic" textLength="84.0" lengthAdjust="spacingAndGlyphs">About Us</text>
<rect x="339.0" y="346.0" width="275.0" height="2.0" fill="#ebebeb" />
<rect x="339.0" y="345.0" width="48.0" height="4.0" fill="#c0504d" />
<rect x="596.0" y="320.5" width="18.0" height="5.0" fill="#ef8a3c" />
<rect x="602.5" y="314.0" width="5.0" height="18.0" fill="#ef8a3c" />
<text x="339.0" y="623.0" font-size="64.0" fill="#262626" font-weight="bold" textLength="166.0" lengthAdjust="spacingAndGlyphs">MEET</text>
<text x="339.0" y="710.0" font-size="64.0" fill="#262626" font-weight="bold" textLength="294.0" lengthAdjust="spacingAndGlyphs">OUR <tspan fill="#f6831f">BEST</tspan></text>
<text x="339.0" y="797.0" font-size="64.0" fill="#262626" font-weight="bold" textLength="298.0" lengthAdjust="spacingAndGlyphs">DESIGNER</text>
<polygon points="337.0,837.0 378.0,837.0 337.0,878.0" fill="#f6831f" />
<text x="893.0" y="378.0" font-size="22.0" fill="#262626" font-style="italic" textLength="120.0" lengthAdjust="spacingAndGlyphs">Art Director</text>
<text x="893.0" y="426.0" font-size="40.0" fill="#333333" textLength="212.0" lengthAdjust="spacingAndGlyphs">Team name</text>
<text x="893.0" y="554.6" font-size="21.5" fill="#595959" textLength="461.7" lengthAdjust="spacingAndGlyphs">Far far away, behind the word mountains, far from</text>
<text x="893.0" y="581.9" font-size="21.5" fill="#595959" textLength="489.0" lengthAdjust="spacingAndGlyphs">the countries Vokalia and Consonantia, there live the</text>
<text x="893.0" y="609.2" font-size="21.5" fill="#595959" textLength="470.3" lengthAdjust="spacingAndGlyphs">blind texts. Separated they live in Bookmarksgrove</text>
<text x="893.0" y="636.5" font-size="21.5" fill="#595959" textLength="484.3" lengthAdjust="spacingAndGlyphs">right at the coast of the Semantics, a large language</text>
<text x="893.0" y="663.8" font-size="21.5" fill="#595959" textLength="62.9" lengthAdjust="spacingAndGlyphs">ocean.</text>
<text x="909.0" y="811.0" font-size="14.0" fill="#595959" textLength="76.0" lengthAdjust="spacingAndGlyphs">Photoshop</text>
<text x="1190.0" y="811.0" font-size="14.0" fill="#595959" textLength="31.0" lengthAdjust="spacingAndGlyphs">85%</text>
<rect x="893.0" y="828.5" width="345.0" height="7.0" fill="#d4d4d4" />
<rect x="893.0" y="828.5" width="277.7" height="7.0" fill="#df7a38" />
<text x="909.0" y="868.0" font-size="14.0" fill="#595959" textLength="70.0" lengthAdjust="spacingAndGlyphs">Illustrator</text>
<text x="1190.0" y="868.0" font-size="14.0" fill="#595959" textLength="31.0" lengthAdjust="spacingAndGlyphs">70%</text>
<rect x="893.0" y="885.5" width="345.0" height="7.0" fill="#d4d4d4" />
<rect x="893.0" y="885.5" width="235.6" height="7.0" fill="#df7a38" />
<text x="907.0" y="1034.0" font-size="28.0" fill="#595959" textLength="52.0" lengthAdjust="spacingAndGlyphs">Sign</text>
<rect x="1412.0" y="293.5" width="62.0" height="11.0" fill="#d9d9d9" />
<rect x="1437.5" y="268.0" width="11.0" height="62.0" fill="#d9d9d9" />
<clipPath id="c18"><rect x="1580.0" y="257.0" width="454.0" height="853.0"/></clipPath>
<g clip-path="url(#c18)"><g transform="translate(1539.59,220.35) scale(0.59424,0.59113)"><g filter="url(#b20)"><rect x="-200" y="-200" width="1300" height="2000" fill="#b7c0c7"/><rect x="-200" y="-200" width="1300" height="430" fill="#748b99"/><rect x="-200" y="200" width="1300" height="200" fill="#92a5b0"/><ellipse cx="250" cy="330" rx="380" ry="70" fill="#c6cfd5"/><ellipse cx="560" cy="160" rx="280" ry="35" fill="#b3c1ca"/><ellipse cx="150" cy="100" rx="120" ry="40" fill="#a9b9c3"/><rect x="-200" y="520" width="1300" height="380" fill="#c3c8cf"/><rect x="-200" y="740" width="1300" height="160" fill="#d9d2d4"/><ellipse cx="740" cy="800" rx="160" ry="50" fill="#e2dcde"/></g><g filter="url(#b6)"><rect x="-200" y="915" width="1300" height="885" fill="#45483b"/><rect x="-200" y="925" width="1300" height="85" fill="#6a6552"/><rect x="-200" y="1120" width="1300" height="680" fill="#262f29"/><rect x="-200" y="1320" width="1300" height="480" fill="#161e19"/><polygon points="68,900 90,860 130,900 200,880 250,870 340,905 340,925 68,925" fill="#222c2a"/><polygon points="540,890 640,880 760,890 790,830 832,830 840,925 540,925" fill="#222c2a"/><ellipse cx="445" cy="880" rx="78" ry="150" fill="#a87c5c"/><ellipse cx="445" cy="775" rx="58" ry="45" fill="#7a5a44"/><polygon points="325,990 370,925 525,925 560,975 535,1105 390,1105" fill="#d6d2ce"/><ellipse cx="450" cy="1200" rx="95" ry="110" fill="#13171a"/><ellipse cx="345" cy="1100" rx="20" ry="110" fill="#9a7458"/><ellipse cx="618" cy="452" rx="30" ry="32" fill="#b65a30"/><ellipse cx="542" cy="505" rx="21" ry="22" fill="#7c3a32"/><ellipse cx="350" cy="708" rx="28" ry="28" fill="#a85450"/></g></g></g>
</svg>
<svg style="left:1961px;top:1148px" width="660" height="400" viewBox="0 0 2351 1425">
<text x="147.0" y="148.0" font-size="27.0" fill="#0d0d0d" textLength="287.0" lengthAdjust="spacingAndGlyphs">Presentation template</text>
<polygon points="2148.0,74.0 2262.0,74.0 2262.0,188.0" fill="#f6831f" />
<rect x="143.0" y="1130.0" width="12.0" height="115.0" fill="#e3e3e3" />
<rect x="143.0" y="1233.0" width="117.0" height="12.0" fill="#e3e3e3" />
<text x="2220.0" y="1268.5" font-size="27.0" fill="#0d0d0d" text-anchor="end" textLength="287.0" lengthAdjust="spacingAndGlyphs">Presentation template</text>
<text x="358.0" y="372.5" font-size="21.0" fill="#4d4d4d" font-style="italic" textLength="882.0" lengthAdjust="spacingAndGlyphs">Far far away, behind the word mountains, far from the countries Vokalia and Consonantia, there</text>
<text x="358.0" y="400.5" font-size="21.0" fill="#4d4d4d" font-style="italic" textLength="885.5" lengthAdjust="spacingAndGlyphs">live the blind texts. Separated they live in Bookmarksgrove right at the coast of the Semantics, a</text>
<text x="358.0" y="427.5" font-size="21.0" fill="#4d4d4d" font-style="italic" textLength="206.6" lengthAdjust="spacingAndGlyphs">large language ocean.</text>
<text x="358.0" y="481.5" font-size="21.0" fill="#4d4d4d" font-style="italic" textLength="885.8" lengthAdjust="spacingAndGlyphs">A small river named Duden flows by their place and supplies it with the necessary regelialia. It is</text>
<text x="358.0" y="508.5" font-size="21.0" fill="#4d4d4d" font-style="italic" textLength="225.9" lengthAdjust="spacingAndGlyphs">a paradisematic country.</text>
<text x="358.0" y="563.5" font-size="21.0" fill="#4d4d4d" font-style="italic" textLength="121.8" lengthAdjust="spacingAndGlyphs">- The Quotes</text>
<clipPath id="c19"><rect x="338.0" y="662.0" width="454.0" height="216.0"/></clipPath>
<g clip-path="url(#c19)"><g transform="translate(325.16,670.43) scale(0.20702,0.21073)"><g filter="url(#b8)"><rect x="-300" y="-300" width="2900" height="1700" fill="#e6e5e9"/><rect x="-300" y="-30" width="2900" height="14" fill="#c9c8cd" opacity="0.8"/><rect x="-300" y="50" width="2900" height="14" fill="#c9c8cd" opacity="0.8"/><rect x="-300" y="195" width="2900" height="14" fill="#c9c8cd" opacity="0.8"/><rect x="-300" y="335" width="2900" height="14" fill="#c9c8cd" opacity="0.8"/><rect x="-300" y="545" width="2900" height="14" fill="#c9c8cd" opacity="0.8"/><rect x="-300" y="800" width="2900" height="14" fill="#c9c8cd" opacity="0.8"/><rect x="-300" y="940" width="2900" height="14" fill="#c9c8cd" opacity="0.8"/><rect x="-300" y="90" width="2900" height="60" fill="#f2f1f4" opacity="0.7"/><rect x="-300" y="240" width="2900" height="60" fill="#f2f1f4" opacity="0.7"/><rect x="-300" y="400" width="2900" height="60" fill="#f2f1f4" opacity="0.7"/><rect x="-300" y="620" width="2900" height="60" fill="#f2f1f4" opacity="0.7"/><rect x="-300" y="850" width="2900" height="60" fill="#f2f1f4" opacity="0.7"/></g><g filter="url(#b9)"><polygon points="275,430 400,405 430,560 700,850 720,1100 560,1100 310,600" fill="#e2bfab"/><polygon points="2040,560 2160,585 2175,700 2010,870 1790,1100 1650,1100 1650,830 1990,780" fill="#e2bfab"/><polygon points="735,600 880,512 1060,490 1200,540 1330,490 1500,560 1625,690 1500,850 1500,1100 840,1100 820,820" fill="#8d9095"/><ellipse cx="1190" cy="470" rx="130" ry="70" fill="#dab49c"/><ellipse cx="1195" cy="170" rx="200" ry="200" fill="#a88860"/><ellipse cx="1020" cy="280" rx="55" ry="90" fill="#4f3b2e"/><ellipse cx="1380" cy="260" rx="50" ry="120" fill="#947352"/><ellipse cx="1180" cy="250" rx="128" ry="190" fill="#e6c0a8"/><polygon points="1000,300 1010,345 330,378 330,340" fill="#8a6a48"/><polygon points="1390,280 1415,325 2060,555 2080,515" fill="#8a6a48"/><ellipse cx="330" cy="400" rx="60" ry="50" fill="#e2bfab"/><ellipse cx="2080" cy="560" rx="60" ry="50" fill="#e2bfab"/></g><g filter="url(#b4)"><rect x="900" y="745" width="45" height="255" fill="#5b2133"/><rect x="1005" y="745" width="45" height="255" fill="#5b2133"/><rect x="900" y="960" width="150" height="40" fill="#5b2133"/><rect x="1110" y="760" width="140" height="40" fill="#5b2133"/><rect x="1110" y="760" width="40" height="120" fill="#5b2133"/><rect x="1110" y="850" width="140" height="40" fill="#5b2133"/><rect x="1210" y="860" width="40" height="140" fill="#5b2133"/><rect x="1110" y="960" width="140" height="40" fill="#5b2133"/><polygon points="1330,1000 1390,780 1440,780 1500,1000 1450,1000 1415,850 1380,1000" fill="#5b2133"/><ellipse cx="1185" cy="330" rx="40" ry="18" fill="#d08a88"/></g></g></g>
<clipPath id="c20"><rect x="902.0" y="662.0" width="455.0" height="216.0"/></clipPath>
<g clip-path="url(#c20)"><g transform="translate(297.37,612.70) scale(0.47053,0.46957)"><g filter="url(#b10)"><rect x="1000" y="0" width="1500" height="700" fill="#1a3b41"/><rect x="1285" y="105" width="415" height="95" fill="#21464c"/><rect x="1285" y="330" width="315" height="90" fill="#254a50"/><rect x="1285" y="450" width="275" height="115" fill="#1d4046"/><rect x="2150" y="0" width="350" height="700" fill="#a9b1b1"/><rect x="2150" y="105" width="350" height="25" fill="#2a3434"/><rect x="2060" y="0" width="90" height="700" fill="#122a2e"/><ellipse cx="1930" cy="300" rx="170" ry="250" fill="#0b0b0f"/><ellipse cx="2000" cy="480" rx="150" ry="150" fill="#0b0b0f"/><polygon points="1500,600 1560,470 2050,470 2110,600" fill="#0a0c10"/><ellipse cx="1775" cy="270" rx="95" ry="120" fill="#caa283"/><ellipse cx="1665" cy="410" rx="65" ry="105" fill="#c19979"/><ellipse cx="1760" cy="190" rx="90" ry="40" fill="#1a1214"/></g></g></g>
<text x="359.0" y="967.0" font-size="14.0" fill="#595959" textLength="76.0" lengthAdjust="spacingAndGlyphs">Photoshop</text>
<text x="640.0" y="967.0" font-size="14.0" fill="#595959" textLength="31.0" lengthAdjust="spacingAndGlyphs">85%</text>
<rect x="343.0" y="984.5" width="345.0" height="7.0" fill="#d4d4d4" />
<rect x="343.0" y="984.5" width="277.7" height="7.0" fill="#df7a38" />
<text x="359.0" y="1024.0" font-size="14.0" fill="#595959" textLength="70.0" lengthAdjust="spacingAndGlyphs">Illustrator</text>
<text x="640.0" y="1024.0" font-size="14.0" fill="#595959" textLength="31.0" lengthAdjust="spacingAndGlyphs">70%</text>
<rect x="343.0" y="1041.5" width="345.0" height="7.0" fill="#d4d4d4" />
<rect x="343.0" y="1041.5" width="235.6" height="7.0" fill="#df7a38" />
<text x="924.0" y="967.0" font-size="14.0" fill="#595959" textLength="76.0" lengthAdjust="spacingAndGlyphs">Photoshop</text>
<text x="1205.0" y="967.0" font-size="14.0" fill="#595959" textLength="31.0" lengthAdjust="spacingAndGlyphs">85%</text>
<rect x="908.0" y="984.5" width="345.0" height="7.0" fill="#d4d4d4" />
<rect x="908.0" y="984.5" width="277.7" height="7.0" fill="#df7a38" />
<text x="924.0" y="1024.0" font-size="14.0" fill="#595959" textLength="70.0" lengthAdjust="spacingAndGlyphs">Illustrator</text>
<text x="1205.0" y="1024.0" font-size="14.0" fill="#595959" textLength="31.0" lengthAdjust="spacingAndGlyphs">70%</text>
<rect x="908.0" y="1041.5" width="345.0" height="7.0" fill="#d4d4d4" />
<rect x="908.0" y="1041.5" width="235.6" height="7.0" fill="#df7a38" />
<text x="1580.0" y="368.0" font-size="19.0" fill="#404040" font-style="italic" textLength="84.0" lengthAdjust="spacingAndGlyphs">About Us</text>
<rect x="1571.0" y="384.0" width="275.0" height="2.0" fill="#ebebeb" />
<rect x="1571.0" y="383.0" width="48.0" height="4.0" fill="#c0504d" />
<rect x="1828.0" y="358.5" width="18.0" height="5.0" fill="#ef8a3c" />
<rect x="1834.5" y="352.0" width="5.0" height="18.0" fill="#ef8a3c" />
<text x="1571.0" y="661.0" font-size="64.0" fill="#262626" font-weight="bold" textLength="146.0" lengthAdjust="spacingAndGlyphs">TWO</text>
<text x="1571.0" y="748.0" font-size="64.0" fill="#262626" font-weight="bold" textLength="252.0" lengthAdjust="spacingAndGlyphs">PIC<tspan fill="#f6831f">TURE</tspan></text>
<text x="1571.0" y="835.0" font-size="64.0" fill="#262626" font-weight="bold" textLength="324.0" lengthAdjust="spacingAndGlyphs">SLIDE TEXT</text>
<polygon points="1570.0,877.0 1610.0,877.0 1570.0,917.0" fill="#f6831f" />
</svg>
<svg style="left:0;top:1520px" width="2621" height="228" viewBox="0 1520 2621 228">
<defs><radialGradient id="og" cx="0.45" cy="0.4" r="0.7"><stop offset="0" stop-color="#f68a34"/><stop offset="1" stop-color="#f07a22"/></radialGradient><filter id="cs" x="-50%" y="-50%" width="200%" height="200%"><feGaussianBlur stdDeviation="3.5"/></filter></defs>
<circle cx="271.1" cy="1626.7" r="41.2" fill="url(#og)"/>
<path d="M248.3 1616.1 L269.8 1636.6 L302.1 1592.3" fill="none" stroke="#7a3a08" stroke-opacity=".5" stroke-width="11" filter="url(#cs)" transform="translate(2,6)"/>
<path d="M248.3 1616.1 L269.8 1636.6 L302.1 1592.3" fill="none" stroke="#ffffff" stroke-width="11" stroke-linejoin="miter"/>
<text x="371" y="1653.6" font-size="62" fill="#808080" textLength="1991" lengthAdjust="spacing">No install fonts, PSD, and anything else, just straight edit</text>
</svg>
</body></html>
